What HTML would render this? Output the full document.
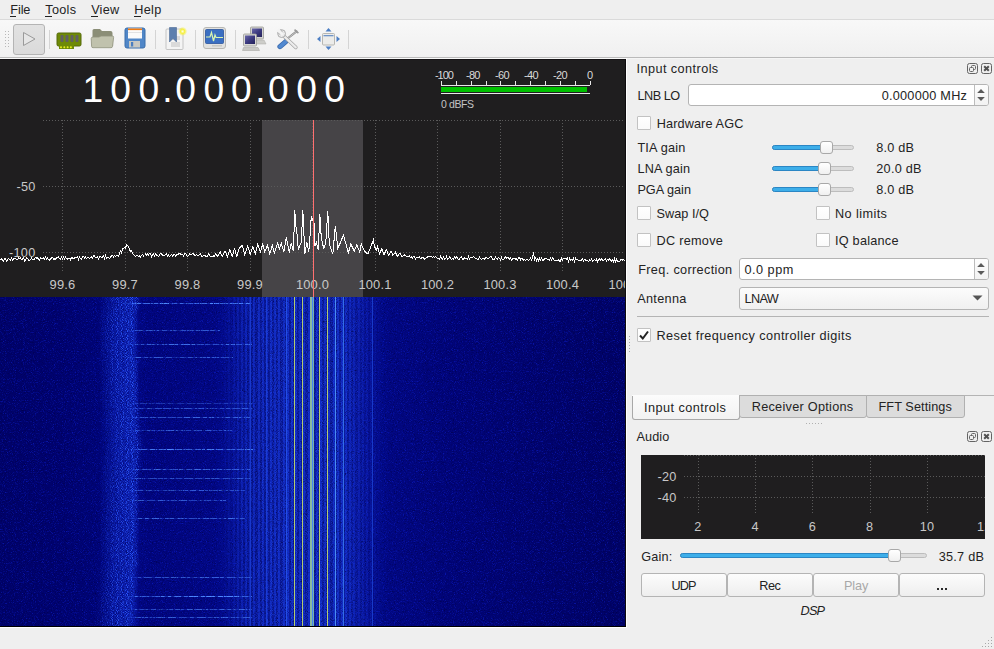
<!DOCTYPE html><html><head><meta charset="utf-8"><style>
html,body{margin:0;padding:0;width:994px;height:649px;overflow:hidden;background:#efefef;}
body{position:relative;font-family:"Liberation Sans",sans-serif;}
.a{position:absolute;}
.t{position:absolute;white-space:nowrap;font-family:"Liberation Sans",sans-serif;}
</style></head><body>
<div class="a" style="left:0px;top:0px;width:994px;height:19px;background:#efefef"></div>
<div class="a" style="left:0px;top:19px;width:994px;height:1px;background:#dadada"></div>
<div class="a" style="left:0px;top:20px;width:994px;height:37px;background:linear-gradient(#f8f8f8,#f0f0f0)"></div>
<div class="a" style="left:0px;top:57px;width:994px;height:1px;background:#bababa"></div>
<div class="a" style="left:0px;top:58px;width:627px;height:1px;background:#f8f8f8"></div>
<div class="a" style="left:627px;top:58px;width:367px;height:1px;background:#f5f5f5"></div>
<div class="t" style="left:10.30px;top:3.95px;font-size:12.7px;line-height:12.7px;color:#232323;letter-spacing:-0.117px;">File</div>
<div class="t" style="left:45.30px;top:3.95px;font-size:12.7px;line-height:12.7px;color:#232323;letter-spacing:0.287px;">Tools</div>
<div class="t" style="left:91.20px;top:3.95px;font-size:12.7px;line-height:12.7px;color:#232323;letter-spacing:0.200px;">View</div>
<div class="t" style="left:134.30px;top:3.95px;font-size:12.7px;line-height:12.7px;color:#232323;letter-spacing:0.300px;">Help</div>
<div class="a" style="left:10px;top:16px;width:6px;height:1px;background:#232323"></div>
<div class="a" style="left:45px;top:16px;width:7px;height:1px;background:#232323"></div>
<div class="a" style="left:91px;top:16px;width:7px;height:1px;background:#232323"></div>
<div class="a" style="left:134px;top:16px;width:7px;height:1px;background:#232323"></div>
<div class="a" style="left:5px;top:31px;width:1px;height:1px;background:#b8b8b8"></div>
<div class="a" style="left:8px;top:31px;width:1px;height:1px;background:#b8b8b8"></div>
<div class="a" style="left:5px;top:34px;width:1px;height:1px;background:#b8b8b8"></div>
<div class="a" style="left:8px;top:34px;width:1px;height:1px;background:#b8b8b8"></div>
<div class="a" style="left:5px;top:37px;width:1px;height:1px;background:#b8b8b8"></div>
<div class="a" style="left:8px;top:37px;width:1px;height:1px;background:#b8b8b8"></div>
<div class="a" style="left:5px;top:40px;width:1px;height:1px;background:#b8b8b8"></div>
<div class="a" style="left:8px;top:40px;width:1px;height:1px;background:#b8b8b8"></div>
<div class="a" style="left:5px;top:43px;width:1px;height:1px;background:#b8b8b8"></div>
<div class="a" style="left:8px;top:43px;width:1px;height:1px;background:#b8b8b8"></div>
<div class="a" style="left:5px;top:46px;width:1px;height:1px;background:#b8b8b8"></div>
<div class="a" style="left:8px;top:46px;width:1px;height:1px;background:#b8b8b8"></div>
<div class="a" style="left:13px;top:24px;width:32px;height:31px;box-sizing:border-box;border:1px solid #b4b4b4;border-radius:3px;background:linear-gradient(#e2e2e2,#dadada)"></div>
<svg class="a" style="left:21px;top:31px" width="16" height="16"><path d="M2.5 1.5 L14 8 L2.5 14.5 Z" fill="#e6e6e6" stroke="#9a9a9a" stroke-width="1"/></svg>
<div class="a" style="left:49px;top:30px;width:1px;height:19px;background:#d4d4d4"></div>
<div class="a" style="left:155px;top:30px;width:1px;height:19px;background:#d4d4d4"></div>
<div class="a" style="left:195px;top:30px;width:1px;height:19px;background:#d4d4d4"></div>
<div class="a" style="left:235px;top:30px;width:1px;height:19px;background:#d4d4d4"></div>
<div class="a" style="left:308px;top:30px;width:1px;height:19px;background:#d4d4d4"></div>
<div class="a" style="left:348px;top:30px;width:1px;height:19px;background:#d4d4d4"></div>
<svg class="a" style="left:56px;top:31px" width="28" height="20">
<rect x="1" y="2" width="24" height="13" rx="1.5" fill="#6e8a06" stroke="#55690a" stroke-width="1"/>
<rect x="3" y="14" width="15" height="4" fill="#6e8a06"/>
<rect x="4.5" y="4" width="3" height="7" rx="1" fill="#606060"/><rect x="9.5" y="4" width="3" height="7" rx="1" fill="#606060"/>
<rect x="14.5" y="4" width="3" height="7" rx="1" fill="#606060"/><rect x="19.5" y="4" width="3" height="7" rx="1" fill="#606060"/>
<circle cx="5" cy="16.3" r="1" fill="#e8f020"/><circle cx="8.3" cy="16.3" r="1" fill="#e8f020"/><circle cx="11.6" cy="16.3" r="1" fill="#e8f020"/><circle cx="14.9" cy="16.3" r="1" fill="#e8f020"/>
</svg>
<svg class="a" style="left:90px;top:28px" width="26" height="22">
<path d="M2.5 2.5 Q2.5 1 4 1 L10 1 L12 3 L20.5 3 Q22.5 3 22.5 5 L22.5 18 L2.5 18 Z" fill="#8b8e77"/>
<path d="M1.2 10.5 Q1.2 9 3 9 L9 9 L11 8 L22.5 8 Q23.8 8 23.6 9.5 L22.6 18.3 Q22.4 19.7 21 19.7 L3 19.7 Q1.6 19.7 1.6 18.3 Z" fill="#c0c2ad" stroke="#8f927c" stroke-width="0.8"/>
</svg>
<svg class="a" style="left:124px;top:27px" width="23" height="22">
<rect x="1" y="1" width="20" height="20" rx="2" fill="#5087c8" stroke="#3b6eab" stroke-width="1"/>
<rect x="4" y="1.5" width="14" height="10" fill="#fafafa"/>
<rect x="4" y="1.5" width="14" height="1.6" fill="#f07a10"/>
<rect x="4" y="5" width="14" height="0.8" fill="#dcdcdc"/>
<rect x="5" y="14" width="11" height="6.5" fill="#c8c8c2"/>
<rect x="7" y="15" width="2.2" height="4.5" fill="#4a7ec0"/>
</svg>
<svg class="a" style="left:164px;top:26px" width="24" height="25">
<rect x="2" y="3" width="17" height="20.5" rx="1" fill="#f4f4f4" stroke="#c4c4c4" stroke-width="1"/>
<rect x="7" y="10" width="9" height="4" fill="#dadada"/><rect x="7" y="16" width="9" height="5" fill="#dadada"/>
<path d="M5.5 1.5 L12.5 1.5 L12.5 16 L9 12.5 L5.5 16 Z" fill="#5d7fae" stroke="#4b6a96" stroke-width="0.6"/>
<defs><radialGradient id="stg1"><stop offset="0" stop-color="#ffffe8"/><stop offset="0.45" stop-color="#f6f040"/><stop offset="1" stop-color="#f6f040" stop-opacity="0"/></radialGradient></defs><circle cx="18.6" cy="5.4" r="4.6" fill="url(#stg1)"/>
</svg>
<svg class="a" style="left:202px;top:26px" width="26" height="24">
<rect x="1.5" y="1.5" width="22" height="21" rx="2.5" fill="#e2e2e0" stroke="#b8b8b4" stroke-width="1"/>
<rect x="3.5" y="3.5" width="18" height="14" rx="1" fill="#3a6fc2" stroke="#2b549a" stroke-width="0.8"/>
<path d="M4 11 L8 11 L9.5 6.5 L11.5 15 L13 9 L14 11.5 L21 11.5" fill="none" stroke="#d8f5b0" stroke-width="1.2"/>
<rect x="10" y="19" width="10" height="1.5" fill="#c8c8c4"/>
</svg>
<svg class="a" style="left:242px;top:26px" width="26" height="26">
<defs><linearGradient id="scr" x1="0" y1="0" x2="1" y2="1"><stop offset="0" stop-color="#6a68a8"/><stop offset="0.5" stop-color="#3c3a80"/><stop offset="1" stop-color="#25235a"/></linearGradient></defs>
<rect x="8.5" y="1" width="13" height="12" rx="1" fill="#d4d4d0" stroke="#9a9a96" stroke-width="0.8"/>
<rect x="10" y="2.5" width="10" height="8.5" fill="url(#scr)"/>
<path d="M12 14 L22 14 L24 18 L13 18 Z" fill="#cdcdc9" stroke="#a8a8a4" stroke-width="0.5"/>
<rect x="1.5" y="8" width="13" height="12" rx="1" fill="#dadad6" stroke="#9a9a96" stroke-width="0.8"/>
<rect x="3" y="9.5" width="10" height="8.5" fill="url(#scr)"/>
<path d="M1.5 21.5 L16 21.5 L17.5 24.5 L0.5 24.5 Z" fill="#c8c8c4" stroke="#a0a09c" stroke-width="0.5"/>
</svg>
<svg class="a" style="left:274px;top:26px" width="28" height="26">
<path d="M22.6 5.4 L13.5 12.5" stroke="#8a8a8a" stroke-width="2" stroke-linecap="round"/>
<path d="M22.6 5.4 L13.5 12.5" stroke="#e0e0e0" stroke-width="0.7"/>
<path d="M20.5 3.6 L24.4 7.2" stroke="#9a9a9a" stroke-width="1.6"/>
<path d="M11.8 15.6 L6 20.6" stroke="#3a6aae" stroke-width="5.2" stroke-linecap="round"/>
<path d="M11.8 15.6 L6 20.6" stroke="#5189d0" stroke-width="3.6" stroke-linecap="round"/>
<path d="M9.5 9.8 L21.8 21.4" stroke="#a4a4a4" stroke-width="3.6" stroke-linecap="round"/>
<path d="M9.5 9.8 L21.8 21.4" stroke="#ececec" stroke-width="2.2" stroke-linecap="round"/>
<circle cx="7.6" cy="7.6" r="3.9" fill="#ececec" stroke="#a4a4a4" stroke-width="0.9"/>
<path d="M2.2 5.2 L5.2 2.2 L8.8 6.4 L6.4 8.8 Z" fill="#f3f3f3"/><path d="M3.4 6.4 L6.4 8.8" stroke="#a4a4a4" stroke-width="0.8"/><path d="M6.4 3.4 L8.8 6.4" stroke="#a4a4a4" stroke-width="0.8"/>
<circle cx="7.9" cy="7.9" r="1.3" fill="#f4f4f4"/>
</svg>
<svg class="a" style="left:316px;top:27px" width="25" height="24">
<path d="M12.5 1 L15.5 4.5 L9.5 4.5 Z" fill="#4d7fc4"/>
<path d="M12.5 23 L15.5 19.5 L9.5 19.5 Z" fill="#4d7fc4"/>
<path d="M1 12 L4.5 9 L4.5 15 Z" fill="#4d7fc4"/>
<path d="M24 12 L20.5 9 L20.5 15 Z" fill="#4d7fc4"/>
<rect x="6.5" y="6.5" width="12" height="11.5" rx="1" fill="#ececea" stroke="#b0b0ac" stroke-width="0.9"/>
<rect x="7.5" y="8" width="10" height="1.3" fill="#6f94c8"/>
</svg>
<div class="a" style="left:0px;top:59px;width:626px;height:568px;background:#1f1e1f"></div>
<div class="a" style="left:0px;top:59px;width:626px;height:1px;background:#141214"></div>
<div class="a" style="left:625px;top:59px;width:1px;height:568px;background:#0e0c0e"></div>
<div class="a" style="left:626px;top:58px;width:1px;height:570px;background:#ffffff"></div>
<div class="a" style="left:0;top:0;width:625px;height:297px;overflow:hidden">
<div class="t" style="left:72.75px;top:70.61px;width:40px;text-align:center;font-size:37.2px;line-height:37.2px;color:#ffffff">1</div>
<div class="t" style="left:100.50px;top:70.61px;width:40px;text-align:center;font-size:37.2px;line-height:37.2px;color:#ffffff">0</div>
<div class="t" style="left:128.75px;top:70.61px;width:40px;text-align:center;font-size:37.2px;line-height:37.2px;color:#ffffff">0</div>
<div class="t" style="left:147.50px;top:70.61px;width:40px;text-align:center;font-size:37.2px;line-height:37.2px;color:#ffffff">.</div>
<div class="t" style="left:165.50px;top:70.61px;width:40px;text-align:center;font-size:37.2px;line-height:37.2px;color:#ffffff">0</div>
<div class="t" style="left:193.75px;top:70.61px;width:40px;text-align:center;font-size:37.2px;line-height:37.2px;color:#ffffff">0</div>
<div class="t" style="left:221.30px;top:70.61px;width:40px;text-align:center;font-size:37.2px;line-height:37.2px;color:#ffffff">0</div>
<div class="t" style="left:240.50px;top:70.61px;width:40px;text-align:center;font-size:37.2px;line-height:37.2px;color:#ffffff">.</div>
<div class="t" style="left:258.30px;top:70.61px;width:40px;text-align:center;font-size:37.2px;line-height:37.2px;color:#ffffff">0</div>
<div class="t" style="left:286.50px;top:70.61px;width:40px;text-align:center;font-size:37.2px;line-height:37.2px;color:#ffffff">0</div>
<div class="t" style="left:314.70px;top:70.61px;width:40px;text-align:center;font-size:37.2px;line-height:37.2px;color:#ffffff">0</div>
<div class="a" style="left:441px;top:85px;width:149px;height:1px;background:#e8e8e8"></div>
<div class="a" style="left:441px;top:81px;width:1px;height:4px;background:#e8e8e8"></div>
<div class="a" style="left:456px;top:81px;width:1px;height:4px;background:#e8e8e8"></div>
<div class="a" style="left:471px;top:81px;width:1px;height:4px;background:#e8e8e8"></div>
<div class="a" style="left:486px;top:81px;width:1px;height:4px;background:#e8e8e8"></div>
<div class="a" style="left:500px;top:81px;width:1px;height:4px;background:#e8e8e8"></div>
<div class="a" style="left:515px;top:81px;width:1px;height:4px;background:#e8e8e8"></div>
<div class="a" style="left:530px;top:81px;width:1px;height:4px;background:#e8e8e8"></div>
<div class="a" style="left:545px;top:81px;width:1px;height:4px;background:#e8e8e8"></div>
<div class="a" style="left:560px;top:81px;width:1px;height:4px;background:#e8e8e8"></div>
<div class="a" style="left:575px;top:81px;width:1px;height:4px;background:#e8e8e8"></div>
<div class="a" style="left:590px;top:81px;width:1px;height:4px;background:#e8e8e8"></div>
<div class="a" style="left:441px;top:87px;width:146px;height:5px;background:#00c000"></div>
<div class="a" style="left:441px;top:93px;width:149px;height:1px;background:#e8e8e8"></div>
<div class="t" style="left:434.90px;top:69.99px;font-size:11px;line-height:11px;color:#dadada;letter-spacing:-1.000px;">-100</div>
<div class="t" style="left:465.95px;top:69.99px;font-size:11px;line-height:11px;color:#dadada;letter-spacing:-0.700px;">-80</div>
<div class="t" style="left:495.05px;top:69.99px;font-size:11px;line-height:11px;color:#dadada;letter-spacing:-0.700px;">-60</div>
<div class="t" style="left:524.05px;top:69.99px;font-size:11px;line-height:11px;color:#dadada;letter-spacing:-0.700px;">-40</div>
<div class="t" style="left:553.05px;top:69.99px;font-size:11px;line-height:11px;color:#dadada;letter-spacing:-0.700px;">-20</div>
<div class="t" style="left:586.90px;top:69.99px;font-size:11px;line-height:11px;color:#dadada;">0</div>
<div class="t" style="left:441.00px;top:99.01px;font-size:10.5px;line-height:10.5px;color:#c4c4c4;letter-spacing:-0.400px;">0 dBFS</div>
<div class="a" style="left:262px;top:120px;width:101px;height:177px;background:#464447"></div>
<div class="a" style="left:43px;top:120px;width:583px;height:1px;background-image:linear-gradient(to right,#5a5a5a 1px,transparent 1px);background-size:3px 1px;"></div>
<div class="a" style="left:43px;top:186px;width:583px;height:1px;background-image:linear-gradient(to right,#5a5a5a 1px,transparent 1px);background-size:3px 1px;"></div>
<div class="a" style="left:43px;top:252px;width:583px;height:1px;background-image:linear-gradient(to right,#5a5a5a 1px,transparent 1px);background-size:3px 1px;"></div>
<div class="a" style="left:62px;top:120px;width:1px;height:151px;background-image:linear-gradient(#5a5a5a 1px,transparent 1px);background-size:1px 3px;"></div>
<div class="a" style="left:125px;top:120px;width:1px;height:151px;background-image:linear-gradient(#5a5a5a 1px,transparent 1px);background-size:1px 3px;"></div>
<div class="a" style="left:187px;top:120px;width:1px;height:151px;background-image:linear-gradient(#5a5a5a 1px,transparent 1px);background-size:1px 3px;"></div>
<div class="a" style="left:250px;top:120px;width:1px;height:151px;background-image:linear-gradient(#5a5a5a 1px,transparent 1px);background-size:1px 3px;"></div>
<div class="a" style="left:312px;top:120px;width:1px;height:151px;background-image:linear-gradient(#5a5a5a 1px,transparent 1px);background-size:1px 3px;"></div>
<div class="a" style="left:375px;top:120px;width:1px;height:151px;background-image:linear-gradient(#5a5a5a 1px,transparent 1px);background-size:1px 3px;"></div>
<div class="a" style="left:437px;top:120px;width:1px;height:151px;background-image:linear-gradient(#5a5a5a 1px,transparent 1px);background-size:1px 3px;"></div>
<div class="a" style="left:500px;top:120px;width:1px;height:151px;background-image:linear-gradient(#5a5a5a 1px,transparent 1px);background-size:1px 3px;"></div>
<div class="a" style="left:562px;top:120px;width:1px;height:151px;background-image:linear-gradient(#5a5a5a 1px,transparent 1px);background-size:1px 3px;"></div>
<svg class="a" style="left:0;top:0" width="625" height="296"><path d="M0.5 259.5 L1.5 259.0 L2.5 259.9 L3.5 260.9 L4.5 258.4 L5.5 258.4 L6.5 261.3 L7.5 260.3 L8.5 258.3 L9.5 259.3 L10.5 260.2 L11.5 258.2 L12.5 260.2 L13.5 258.6 L14.5 258.1 L15.5 258.1 L16.5 259.6 L17.5 259.5 L18.5 258.0 L19.5 258.5 L20.5 258.0 L21.5 259.9 L22.5 259.4 L23.5 257.9 L24.5 260.8 L25.5 259.8 L26.5 257.8 L27.5 258.3 L28.5 260.2 L29.5 260.2 L30.5 259.7 L31.5 257.7 L32.5 259.6 L33.5 259.6 L34.5 259.1 L35.5 257.5 L36.5 258.0 L37.5 257.5 L38.5 259.5 L39.5 260.4 L40.5 257.9 L41.5 258.4 L42.5 258.9 L43.5 257.8 L44.5 259.3 L45.5 257.3 L46.5 259.2 L47.5 258.2 L48.5 259.2 L49.5 260.2 L50.5 259.6 L51.5 257.6 L52.5 257.1 L53.5 259.1 L54.5 259.0 L55.5 259.5 L56.5 257.5 L57.5 257.9 L58.5 256.9 L59.5 258.9 L60.5 259.4 L61.5 256.8 L62.5 258.8 L63.5 256.8 L64.5 258.8 L65.5 257.2 L66.5 258.2 L67.5 259.2 L68.5 258.6 L69.5 258.1 L70.5 259.6 L71.5 257.6 L72.5 258.0 L73.5 258.5 L74.5 258.0 L75.5 257.5 L76.5 257.4 L77.5 256.9 L78.5 259.4 L79.5 256.8 L80.5 258.8 L81.5 259.3 L82.5 256.8 L83.5 256.2 L84.5 258.2 L85.5 257.2 L86.5 258.2 L87.5 257.6 L88.5 257.1 L89.5 258.6 L90.5 257.5 L91.5 257.0 L92.5 258.0 L93.5 256.0 L94.5 255.9 L95.5 257.9 L96.5 257.4 L97.5 256.4 L98.5 258.8 L99.5 256.8 L100.5 256.3 L101.5 257.2 L102.5 257.2 L103.5 255.7 L104.5 258.2 L105.5 255.6 L106.5 258.6 L107.5 257.6 L108.5 257.6 L109.5 258.5 L110.5 257.5 L111.5 255.5 L112.5 255.5 L113.5 256.9 L114.5 255.3 L115.5 256.2 L116.5 255.4 L117.5 255.6 L118.5 256.0 L119.5 253.7 L120.5 251.2 L121.5 253.0 L122.5 248.7 L123.5 248.5 L124.5 247.9 L125.5 248.2 L126.5 245.0 L127.5 245.7 L128.5 246.4 L129.5 250.0 L130.5 251.2 L131.5 251.0 L132.5 253.7 L133.5 254.2 L134.5 255.5 L135.5 256.6 L136.5 255.4 L137.5 255.2 L138.5 256.8 L139.5 255.9 L140.5 257.0 L141.5 255.5 L142.5 254.5 L143.5 256.0 L144.5 255.5 L145.5 254.0 L146.5 255.5 L147.5 253.5 L148.5 255.0 L149.5 253.5 L150.5 254.0 L151.5 256.5 L152.5 254.5 L153.5 254.0 L154.5 256.0 L155.5 254.0 L156.5 255.0 L157.5 255.0 L158.5 256.5 L159.5 255.0 L160.5 253.5 L161.5 254.0 L162.5 255.0 L163.5 255.0 L164.5 255.5 L165.5 254.5 L166.5 254.0 L167.5 256.5 L168.5 255.0 L169.5 256.5 L170.5 255.5 L171.5 254.5 L172.5 256.0 L173.5 255.0 L174.5 254.5 L175.5 256.0 L176.5 255.0 L177.5 254.0 L178.5 254.0 L179.5 253.5 L180.5 254.0 L181.5 254.0 L182.5 254.0 L183.5 256.0 L184.5 254.0 L185.5 253.5 L186.5 255.0 L187.5 256.5 L188.5 255.5 L189.5 254.0 L190.5 254.5 L191.5 254.5 L192.5 253.5 L193.5 254.0 L194.5 255.0 L195.5 255.5 L196.5 254.5 L197.5 255.5 L198.5 255.5 L199.5 254.5 L200.5 254.0 L201.5 256.0 L202.5 256.5 L203.5 255.5 L204.5 255.5 L205.5 256.0 L206.5 256.0 L207.5 256.0 L208.5 253.5 L209.5 255.0 L210.5 256.5 L211.5 256.5 L212.5 256.5 L213.5 256.0 L214.5 256.5 L215.5 253.6 L216.5 254.7 L217.5 256.4 L218.5 255.6 L219.5 252.9 L220.5 252.0 L221.5 255.6 L222.5 256.6 L223.5 254.2 L224.5 251.6 L225.5 251.1 L226.5 255.3 L227.5 256.8 L228.5 254.1 L229.5 250.0 L230.5 250.7 L231.5 255.4 L232.5 256.3 L233.5 251.9 L234.5 249.0 L235.5 251.6 L236.5 256.5 L237.5 255.2 L238.5 249.7 L239.5 247.9 L240.3 247.0 L242.3 245.5 L244.8 255.0 L247.8 246.0 L250.3 254.5 L252.8 247.0 L255.3 253.5 L257.8 244.0 L260.3 252.0 L262.8 244.0 L264.8 252.0 L267.3 245.0 L269.8 254.0 L272.3 245.5 L274.3 253.5 L277.8 243.0 L279.3 249.0 L281.3 243.0 L283.8 252.0 L286.3 237.0 L289.3 252.5 L291.3 243.0 L293.3 251.0 L294.8 210.5 L295.8 226.0 L296.8 231.0 L298.3 249.5 L301.3 242.0 L302.8 210.0 L303.8 231.0 L304.8 254.0 L306.8 242.0 L308.8 252.0 L310.3 232.0 L311.3 216.0 L312.8 220.0 L313.8 217.0 L314.8 246.0 L316.3 242.0 L318.3 250.0 L319.8 214.0 L321.3 238.0 L323.8 249.0 L325.8 242.0 L327.8 211.0 L329.3 244.0 L332.8 254.0 L335.3 226.0 L337.8 248.0 L340.3 243.0 L343.3 235.0 L346.3 245.0 L348.3 253.0 L350.8 244.0 L354.3 251.0 L356.8 245.0 L359.8 252.0 L361.3 244.0 L364.3 251.0 L367.8 254.0 L370.3 248.0 L373.3 240.0 L374.3 246.0 L376.3 250.0 L377.5 246.5 L378.5 250.3 L379.5 253.9 L380.5 252.6 L381.5 248.5 L382.5 249.2 L383.5 254.0 L384.5 254.6 L385.5 250.5 L386.5 249.9 L387.5 252.2 L388.5 255.6 L389.5 254.3 L390.5 251.1 L391.5 251.3 L392.5 255.1 L393.5 255.0 L394.5 253.5 L395.5 252.0 L396.5 254.8 L397.5 256.1 L398.5 254.8 L399.5 253.4 L400.5 254.0 L401.5 256.4 L402.5 256.8 L403.5 255.6 L404.5 255.0 L405.5 255.6 L406.5 256.8 L407.5 256.6 L408.5 256.3 L409.5 255.9 L410.5 257.5 L411.5 257.0 L412.5 258.5 L413.5 256.0 L414.5 256.0 L415.5 259.1 L416.5 257.1 L417.5 257.6 L418.5 257.1 L419.5 256.6 L420.5 258.6 L421.5 258.1 L422.5 257.1 L423.5 257.6 L424.5 259.1 L425.5 258.6 L426.5 257.2 L427.5 257.2 L428.5 256.2 L429.5 256.7 L430.5 256.2 L431.5 256.7 L432.5 257.7 L433.5 256.7 L434.5 257.2 L435.5 256.8 L436.5 257.8 L437.5 258.3 L438.5 258.3 L439.5 259.3 L440.5 256.3 L441.5 257.8 L442.5 258.8 L443.5 257.3 L444.5 259.3 L445.5 258.9 L446.5 256.4 L447.5 259.4 L448.5 258.9 L449.5 256.4 L450.5 257.9 L451.5 259.4 L452.5 258.9 L453.5 259.4 L454.5 256.9 L455.5 257.9 L456.5 257.0 L457.5 258.0 L458.5 259.5 L459.5 259.0 L460.5 257.5 L461.5 256.5 L462.5 259.5 L463.5 259.0 L464.5 258.0 L465.5 258.1 L466.5 258.1 L467.5 259.1 L468.5 256.6 L469.5 259.1 L470.5 257.1 L471.5 257.1 L472.5 257.1 L473.5 256.6 L474.5 257.1 L475.5 258.6 L476.5 258.2 L477.5 259.7 L478.5 259.2 L479.5 257.2 L480.5 258.7 L481.5 259.7 L482.5 258.7 L483.5 258.2 L484.5 259.2 L485.5 257.8 L486.5 257.3 L487.5 258.8 L488.5 258.8 L489.5 257.3 L490.5 256.8 L491.5 256.8 L492.5 259.8 L493.5 259.3 L494.5 259.3 L495.5 256.9 L496.5 258.9 L497.5 259.4 L498.5 257.4 L499.5 258.4 L500.5 259.9 L501.5 257.4 L502.5 259.9 L503.5 259.9 L504.5 257.4 L505.5 256.9 L506.5 258.0 L507.5 257.5 L508.5 258.0 L509.5 259.0 L510.5 257.5 L511.5 260.0 L512.5 259.0 L513.5 258.0 L514.5 258.0 L515.5 259.1 L516.5 258.6 L517.5 260.1 L518.5 257.6 L519.5 257.1 L520.5 260.0 L521.5 258.5 L522.5 259.0 L523.5 260.0 L524.5 259.6 L525.5 260.6 L526.5 259.6 L527.5 259.1 L528.5 260.6 L529.5 259.6 L530.5 258.1 L531.5 259.7 L532.5 258.2 L533.5 252.5 L534.5 259.7 L535.5 257.7 L536.5 260.7 L537.5 259.3 L538.5 260.8 L539.5 258.3 L540.5 259.8 L541.5 257.8 L542.5 260.8 L543.5 260.8 L544.5 258.4 L545.5 258.4 L546.5 258.4 L547.5 259.4 L548.5 259.9 L549.5 260.4 L550.5 257.9 L551.5 260.0 L552.5 258.0 L553.5 259.0 L554.5 260.5 L555.5 260.0 L556.5 260.0 L557.5 260.1 L558.5 259.6 L559.5 261.1 L560.5 261.1 L561.5 258.1 L562.5 260.1 L563.5 258.1 L564.5 258.7 L565.5 258.7 L566.5 259.2 L567.5 258.2 L568.5 261.2 L569.5 258.2 L570.5 260.2 L571.5 259.8 L572.5 260.3 L573.5 258.3 L574.5 261.3 L575.5 258.3 L576.5 259.8 L577.5 259.4 L578.5 260.4 L579.5 260.4 L580.5 260.4 L581.5 260.4 L582.5 258.9 L583.5 260.9 L584.5 259.5 L585.5 260.0 L586.5 260.5 L587.5 260.5 L588.5 261.5 L589.5 260.0 L590.5 260.6 L591.5 259.1 L592.5 261.1 L593.5 260.6 L594.5 259.6 L595.5 260.6 L596.5 259.1 L597.5 261.7 L598.5 260.2 L599.5 259.2 L600.5 260.2 L601.5 258.7 L602.5 260.2 L603.5 260.2 L604.5 259.8 L605.5 258.8 L606.5 261.3 L607.5 259.3 L608.5 260.3 L609.5 258.8 L610.5 259.4 L611.5 261.4 L612.5 259.9 L613.5 261.9 L614.5 258.9 L615.5 261.9 L616.5 259.4 L617.5 261.5 L618.5 261.5 L619.5 261.5 L620.5 260.0 L621.5 259.5 L622.5 260.0 L623.5 259.5 L624.5 260.6 L625.5 259.6" fill="none" stroke="#ffffff" stroke-width="1" stroke-linejoin="miter" shape-rendering="crispEdges"/></svg>
<div class="t" style="left:16.50px;top:181.25px;font-size:12.7px;line-height:12.7px;color:#c8c8c8;letter-spacing:0.175px;">-50</div>
<div class="t" style="left:8.90px;top:247.25px;font-size:12.7px;line-height:12.7px;color:#c8c8c8;letter-spacing:0.300px;">-100</div>
<div class="t" style="left:49.60px;top:279.18px;font-size:12.9px;line-height:12.9px;color:#c8c8c8;letter-spacing:0.167px;">99.6</div>
<div class="t" style="left:112.10px;top:279.18px;font-size:12.9px;line-height:12.9px;color:#c8c8c8;letter-spacing:0.167px;">99.7</div>
<div class="t" style="left:174.60px;top:279.18px;font-size:12.9px;line-height:12.9px;color:#c8c8c8;letter-spacing:0.167px;">99.8</div>
<div class="t" style="left:237.10px;top:279.18px;font-size:12.9px;line-height:12.9px;color:#c8c8c8;letter-spacing:0.167px;">99.9</div>
<div class="t" style="left:295.90px;top:279.18px;font-size:12.9px;line-height:12.9px;color:#c8c8c8;letter-spacing:0.175px;">100.0</div>
<div class="t" style="left:358.40px;top:279.18px;font-size:12.9px;line-height:12.9px;color:#c8c8c8;letter-spacing:0.175px;">100.1</div>
<div class="t" style="left:420.90px;top:279.18px;font-size:12.9px;line-height:12.9px;color:#c8c8c8;letter-spacing:0.175px;">100.2</div>
<div class="t" style="left:483.40px;top:279.18px;font-size:12.9px;line-height:12.9px;color:#c8c8c8;letter-spacing:0.175px;">100.3</div>
<div class="t" style="left:545.90px;top:279.18px;font-size:12.9px;line-height:12.9px;color:#c8c8c8;letter-spacing:0.175px;">100.4</div>
<div class="t" style="left:608.40px;top:279.18px;font-size:12.9px;line-height:12.9px;color:#c8c8c8;letter-spacing:0.175px;">100.5</div>
<div class="a" style="left:313px;top:120px;width:1px;height:177px;background:#ff7070"></div>
</div>
<div class="a" id="wf" style="left:0;top:297px;width:625px;height:329px;overflow:hidden;background:linear-gradient(to right,rgb(0, 2, 104) 0.00%,rgb(0, 2, 110) 9.60%,rgb(0, 4, 118) 16.00%,rgb(0, 5, 120) 15.68%,rgb(5, 16, 146) 18.56%,rgb(8, 22, 158) 21.44%,rgb(2, 7, 130) 22.24%,rgb(1, 5, 124) 24.00%,rgb(2, 7, 130) 34.40%,rgb(5, 14, 146) 37.12%,rgb(9, 24, 164) 40.00%,rgb(12, 30, 176) 45.60%,rgb(12, 30, 176) 55.20%,rgb(5, 13, 144) 59.52%,rgb(2, 7, 128) 62.40%,rgb(1, 4, 118) 72.00%,rgb(0, 2, 100) 100.00%)">
<div class="a" style="left:220px;top:0;width:165px;height:330px;background:repeating-linear-gradient(to right,rgba(40,90,255,0.2) 0px,rgba(40,90,255,0.2) 2px,rgba(0,0,50,0.25) 2px,rgba(0,0,50,0.25) 4.17px);-webkit-mask-image:linear-gradient(to right,transparent,#000 20%,#000 72%,transparent);mask-image:linear-gradient(to right,transparent,#000 20%,#000 72%,transparent)"></div>
<svg class="a" style="left:0;top:0" width="625" height="330"><line x1="124" y1="6.5" x2="252" y2="6.5" stroke="rgb(50,100,240)" stroke-opacity="0.36" stroke-width="1"/><line x1="132" y1="6.5" x2="141" y2="6.5" stroke="rgb(80,140,255)" stroke-opacity="0.85" stroke-width="1"/><line x1="143" y1="6.5" x2="150" y2="6.5" stroke="rgb(80,140,255)" stroke-opacity="0.71" stroke-width="1"/><line x1="151" y1="6.5" x2="158" y2="6.5" stroke="rgb(80,140,255)" stroke-opacity="0.66" stroke-width="1"/><line x1="160" y1="6.5" x2="169" y2="6.5" stroke="rgb(80,140,255)" stroke-opacity="0.95" stroke-width="1"/><line x1="172" y1="6.5" x2="177" y2="6.5" stroke="rgb(80,140,255)" stroke-opacity="0.53" stroke-width="1"/><line x1="180" y1="6.5" x2="184" y2="6.5" stroke="rgb(80,140,255)" stroke-opacity="0.71" stroke-width="1"/><line x1="186" y1="6.5" x2="193" y2="6.5" stroke="rgb(80,140,255)" stroke-opacity="0.56" stroke-width="1"/><line x1="194" y1="6.5" x2="199" y2="6.5" stroke="rgb(80,140,255)" stroke-opacity="0.78" stroke-width="1"/><line x1="200" y1="6.5" x2="207" y2="6.5" stroke="rgb(80,140,255)" stroke-opacity="0.72" stroke-width="1"/><line x1="210" y1="6.5" x2="213" y2="6.5" stroke="rgb(80,140,255)" stroke-opacity="0.97" stroke-width="1"/><line x1="214" y1="6.5" x2="219" y2="6.5" stroke="rgb(80,140,255)" stroke-opacity="1.00" stroke-width="1"/><line x1="220" y1="6.5" x2="228" y2="6.5" stroke="rgb(80,140,255)" stroke-opacity="0.58" stroke-width="1"/><line x1="230" y1="6.5" x2="238" y2="6.5" stroke="rgb(80,140,255)" stroke-opacity="0.79" stroke-width="1"/><line x1="239" y1="6.5" x2="243" y2="6.5" stroke="rgb(80,140,255)" stroke-opacity="0.96" stroke-width="1"/><line x1="246" y1="6.5" x2="250" y2="6.5" stroke="rgb(80,140,255)" stroke-opacity="0.92" stroke-width="1"/><line x1="127" y1="33.5" x2="220" y2="33.5" stroke="rgb(50,100,240)" stroke-opacity="0.25" stroke-width="1"/><line x1="135" y1="33.5" x2="143" y2="33.5" stroke="rgb(80,140,255)" stroke-opacity="0.50" stroke-width="1"/><line x1="146" y1="33.5" x2="155" y2="33.5" stroke="rgb(80,140,255)" stroke-opacity="0.57" stroke-width="1"/><line x1="157" y1="33.5" x2="159" y2="33.5" stroke="rgb(80,140,255)" stroke-opacity="0.60" stroke-width="1"/><line x1="162" y1="33.5" x2="167" y2="33.5" stroke="rgb(80,140,255)" stroke-opacity="0.45" stroke-width="1"/><line x1="170" y1="33.5" x2="177" y2="33.5" stroke="rgb(80,140,255)" stroke-opacity="0.49" stroke-width="1"/><line x1="180" y1="33.5" x2="186" y2="33.5" stroke="rgb(80,140,255)" stroke-opacity="0.45" stroke-width="1"/><line x1="187" y1="33.5" x2="194" y2="33.5" stroke="rgb(80,140,255)" stroke-opacity="0.49" stroke-width="1"/><line x1="196" y1="33.5" x2="200" y2="33.5" stroke="rgb(80,140,255)" stroke-opacity="0.49" stroke-width="1"/><line x1="201" y1="33.5" x2="209" y2="33.5" stroke="rgb(80,140,255)" stroke-opacity="0.54" stroke-width="1"/><line x1="210" y1="33.5" x2="215" y2="33.5" stroke="rgb(80,140,255)" stroke-opacity="0.51" stroke-width="1"/><line x1="218" y1="33.5" x2="220" y2="33.5" stroke="rgb(80,140,255)" stroke-opacity="0.62" stroke-width="1"/><line x1="127" y1="47.5" x2="252" y2="47.5" stroke="rgb(50,100,240)" stroke-opacity="0.27" stroke-width="1"/><line x1="135" y1="47.5" x2="138" y2="47.5" stroke="rgb(80,140,255)" stroke-opacity="0.48" stroke-width="1"/><line x1="141" y1="47.5" x2="144" y2="47.5" stroke="rgb(80,140,255)" stroke-opacity="0.50" stroke-width="1"/><line x1="147" y1="47.5" x2="155" y2="47.5" stroke="rgb(80,140,255)" stroke-opacity="0.58" stroke-width="1"/><line x1="157" y1="47.5" x2="159" y2="47.5" stroke="rgb(80,140,255)" stroke-opacity="0.56" stroke-width="1"/><line x1="162" y1="47.5" x2="167" y2="47.5" stroke="rgb(80,140,255)" stroke-opacity="0.50" stroke-width="1"/><line x1="169" y1="47.5" x2="178" y2="47.5" stroke="rgb(80,140,255)" stroke-opacity="0.74" stroke-width="1"/><line x1="181" y1="47.5" x2="190" y2="47.5" stroke="rgb(80,140,255)" stroke-opacity="0.74" stroke-width="1"/><line x1="191" y1="47.5" x2="195" y2="47.5" stroke="rgb(80,140,255)" stroke-opacity="0.73" stroke-width="1"/><line x1="197" y1="47.5" x2="204" y2="47.5" stroke="rgb(80,140,255)" stroke-opacity="0.46" stroke-width="1"/><line x1="205" y1="47.5" x2="210" y2="47.5" stroke="rgb(80,140,255)" stroke-opacity="0.40" stroke-width="1"/><line x1="213" y1="47.5" x2="219" y2="47.5" stroke="rgb(80,140,255)" stroke-opacity="0.46" stroke-width="1"/><line x1="221" y1="47.5" x2="223" y2="47.5" stroke="rgb(80,140,255)" stroke-opacity="0.41" stroke-width="1"/><line x1="226" y1="47.5" x2="229" y2="47.5" stroke="rgb(80,140,255)" stroke-opacity="0.76" stroke-width="1"/><line x1="231" y1="47.5" x2="235" y2="47.5" stroke="rgb(80,140,255)" stroke-opacity="0.73" stroke-width="1"/><line x1="236" y1="47.5" x2="242" y2="47.5" stroke="rgb(80,140,255)" stroke-opacity="0.44" stroke-width="1"/><line x1="245" y1="47.5" x2="252" y2="47.5" stroke="rgb(80,140,255)" stroke-opacity="0.62" stroke-width="1"/><line x1="127" y1="60.5" x2="233" y2="60.5" stroke="rgb(50,100,240)" stroke-opacity="0.25" stroke-width="1"/><line x1="135" y1="60.5" x2="141" y2="60.5" stroke="rgb(80,140,255)" stroke-opacity="0.68" stroke-width="1"/><line x1="144" y1="60.5" x2="148" y2="60.5" stroke="rgb(80,140,255)" stroke-opacity="0.46" stroke-width="1"/><line x1="150" y1="60.5" x2="152" y2="60.5" stroke="rgb(80,140,255)" stroke-opacity="0.47" stroke-width="1"/><line x1="154" y1="60.5" x2="163" y2="60.5" stroke="rgb(80,140,255)" stroke-opacity="0.63" stroke-width="1"/><line x1="166" y1="60.5" x2="172" y2="60.5" stroke="rgb(80,140,255)" stroke-opacity="0.45" stroke-width="1"/><line x1="175" y1="60.5" x2="177" y2="60.5" stroke="rgb(80,140,255)" stroke-opacity="0.37" stroke-width="1"/><line x1="180" y1="60.5" x2="186" y2="60.5" stroke="rgb(80,140,255)" stroke-opacity="0.41" stroke-width="1"/><line x1="188" y1="60.5" x2="193" y2="60.5" stroke="rgb(80,140,255)" stroke-opacity="0.52" stroke-width="1"/><line x1="195" y1="60.5" x2="197" y2="60.5" stroke="rgb(80,140,255)" stroke-opacity="0.55" stroke-width="1"/><line x1="200" y1="60.5" x2="206" y2="60.5" stroke="rgb(80,140,255)" stroke-opacity="0.50" stroke-width="1"/><line x1="207" y1="60.5" x2="210" y2="60.5" stroke="rgb(80,140,255)" stroke-opacity="0.63" stroke-width="1"/><line x1="212" y1="60.5" x2="219" y2="60.5" stroke="rgb(80,140,255)" stroke-opacity="0.58" stroke-width="1"/><line x1="221" y1="60.5" x2="229" y2="60.5" stroke="rgb(80,140,255)" stroke-opacity="0.42" stroke-width="1"/><line x1="232" y1="60.5" x2="233" y2="60.5" stroke="rgb(80,140,255)" stroke-opacity="0.63" stroke-width="1"/><line x1="127" y1="106.5" x2="252" y2="106.5" stroke="rgb(50,100,240)" stroke-opacity="0.14" stroke-width="1"/><line x1="135" y1="106.5" x2="138" y2="106.5" stroke="rgb(80,140,255)" stroke-opacity="0.30" stroke-width="1"/><line x1="140" y1="106.5" x2="148" y2="106.5" stroke="rgb(80,140,255)" stroke-opacity="0.33" stroke-width="1"/><line x1="149" y1="106.5" x2="154" y2="106.5" stroke="rgb(80,140,255)" stroke-opacity="0.25" stroke-width="1"/><line x1="156" y1="106.5" x2="165" y2="106.5" stroke="rgb(80,140,255)" stroke-opacity="0.31" stroke-width="1"/><line x1="168" y1="106.5" x2="173" y2="106.5" stroke="rgb(80,140,255)" stroke-opacity="0.31" stroke-width="1"/><line x1="176" y1="106.5" x2="184" y2="106.5" stroke="rgb(80,140,255)" stroke-opacity="0.24" stroke-width="1"/><line x1="187" y1="106.5" x2="195" y2="106.5" stroke="rgb(80,140,255)" stroke-opacity="0.26" stroke-width="1"/><line x1="197" y1="106.5" x2="204" y2="106.5" stroke="rgb(80,140,255)" stroke-opacity="0.32" stroke-width="1"/><line x1="205" y1="106.5" x2="211" y2="106.5" stroke="rgb(80,140,255)" stroke-opacity="0.32" stroke-width="1"/><line x1="213" y1="106.5" x2="221" y2="106.5" stroke="rgb(80,140,255)" stroke-opacity="0.23" stroke-width="1"/><line x1="223" y1="106.5" x2="228" y2="106.5" stroke="rgb(80,140,255)" stroke-opacity="0.31" stroke-width="1"/><line x1="230" y1="106.5" x2="239" y2="106.5" stroke="rgb(80,140,255)" stroke-opacity="0.21" stroke-width="1"/><line x1="240" y1="106.5" x2="247" y2="106.5" stroke="rgb(80,140,255)" stroke-opacity="0.24" stroke-width="1"/><line x1="249" y1="106.5" x2="252" y2="106.5" stroke="rgb(80,140,255)" stroke-opacity="0.37" stroke-width="1"/><line x1="127" y1="111.5" x2="252" y2="111.5" stroke="rgb(50,100,240)" stroke-opacity="0.23" stroke-width="1"/><line x1="135" y1="111.5" x2="137" y2="111.5" stroke="rgb(80,140,255)" stroke-opacity="0.44" stroke-width="1"/><line x1="139" y1="111.5" x2="144" y2="111.5" stroke="rgb(80,140,255)" stroke-opacity="0.46" stroke-width="1"/><line x1="147" y1="111.5" x2="152" y2="111.5" stroke="rgb(80,140,255)" stroke-opacity="0.61" stroke-width="1"/><line x1="155" y1="111.5" x2="162" y2="111.5" stroke="rgb(80,140,255)" stroke-opacity="0.48" stroke-width="1"/><line x1="163" y1="111.5" x2="171" y2="111.5" stroke="rgb(80,140,255)" stroke-opacity="0.48" stroke-width="1"/><line x1="174" y1="111.5" x2="179" y2="111.5" stroke="rgb(80,140,255)" stroke-opacity="0.47" stroke-width="1"/><line x1="181" y1="111.5" x2="183" y2="111.5" stroke="rgb(80,140,255)" stroke-opacity="0.45" stroke-width="1"/><line x1="184" y1="111.5" x2="192" y2="111.5" stroke="rgb(80,140,255)" stroke-opacity="0.53" stroke-width="1"/><line x1="195" y1="111.5" x2="197" y2="111.5" stroke="rgb(80,140,255)" stroke-opacity="0.50" stroke-width="1"/><line x1="198" y1="111.5" x2="204" y2="111.5" stroke="rgb(80,140,255)" stroke-opacity="0.56" stroke-width="1"/><line x1="206" y1="111.5" x2="208" y2="111.5" stroke="rgb(80,140,255)" stroke-opacity="0.56" stroke-width="1"/><line x1="210" y1="111.5" x2="217" y2="111.5" stroke="rgb(80,140,255)" stroke-opacity="0.42" stroke-width="1"/><line x1="220" y1="111.5" x2="224" y2="111.5" stroke="rgb(80,140,255)" stroke-opacity="0.40" stroke-width="1"/><line x1="226" y1="111.5" x2="230" y2="111.5" stroke="rgb(80,140,255)" stroke-opacity="0.48" stroke-width="1"/><line x1="232" y1="111.5" x2="240" y2="111.5" stroke="rgb(80,140,255)" stroke-opacity="0.42" stroke-width="1"/><line x1="242" y1="111.5" x2="248" y2="111.5" stroke="rgb(80,140,255)" stroke-opacity="0.58" stroke-width="1"/><line x1="250" y1="111.5" x2="252" y2="111.5" stroke="rgb(80,140,255)" stroke-opacity="0.37" stroke-width="1"/><line x1="127" y1="120.5" x2="252" y2="120.5" stroke="rgb(50,100,240)" stroke-opacity="0.25" stroke-width="1"/><line x1="135" y1="120.5" x2="137" y2="120.5" stroke="rgb(80,140,255)" stroke-opacity="0.57" stroke-width="1"/><line x1="140" y1="120.5" x2="148" y2="120.5" stroke="rgb(80,140,255)" stroke-opacity="0.50" stroke-width="1"/><line x1="150" y1="120.5" x2="156" y2="120.5" stroke="rgb(80,140,255)" stroke-opacity="0.50" stroke-width="1"/><line x1="158" y1="120.5" x2="166" y2="120.5" stroke="rgb(80,140,255)" stroke-opacity="0.49" stroke-width="1"/><line x1="168" y1="120.5" x2="176" y2="120.5" stroke="rgb(80,140,255)" stroke-opacity="0.42" stroke-width="1"/><line x1="177" y1="120.5" x2="182" y2="120.5" stroke="rgb(80,140,255)" stroke-opacity="0.40" stroke-width="1"/><line x1="184" y1="120.5" x2="190" y2="120.5" stroke="rgb(80,140,255)" stroke-opacity="0.66" stroke-width="1"/><line x1="193" y1="120.5" x2="200" y2="120.5" stroke="rgb(80,140,255)" stroke-opacity="0.67" stroke-width="1"/><line x1="203" y1="120.5" x2="207" y2="120.5" stroke="rgb(80,140,255)" stroke-opacity="0.64" stroke-width="1"/><line x1="209" y1="120.5" x2="214" y2="120.5" stroke="rgb(80,140,255)" stroke-opacity="0.66" stroke-width="1"/><line x1="217" y1="120.5" x2="219" y2="120.5" stroke="rgb(80,140,255)" stroke-opacity="0.47" stroke-width="1"/><line x1="222" y1="120.5" x2="224" y2="120.5" stroke="rgb(80,140,255)" stroke-opacity="0.43" stroke-width="1"/><line x1="225" y1="120.5" x2="230" y2="120.5" stroke="rgb(80,140,255)" stroke-opacity="0.63" stroke-width="1"/><line x1="233" y1="120.5" x2="238" y2="120.5" stroke="rgb(80,140,255)" stroke-opacity="0.62" stroke-width="1"/><line x1="239" y1="120.5" x2="241" y2="120.5" stroke="rgb(80,140,255)" stroke-opacity="0.67" stroke-width="1"/><line x1="244" y1="120.5" x2="251" y2="120.5" stroke="rgb(80,140,255)" stroke-opacity="0.53" stroke-width="1"/><line x1="127" y1="133.5" x2="233" y2="133.5" stroke="rgb(50,100,240)" stroke-opacity="0.23" stroke-width="1"/><line x1="135" y1="133.5" x2="140" y2="133.5" stroke="rgb(80,140,255)" stroke-opacity="0.36" stroke-width="1"/><line x1="142" y1="133.5" x2="144" y2="133.5" stroke="rgb(80,140,255)" stroke-opacity="0.37" stroke-width="1"/><line x1="147" y1="133.5" x2="155" y2="133.5" stroke="rgb(80,140,255)" stroke-opacity="0.48" stroke-width="1"/><line x1="158" y1="133.5" x2="164" y2="133.5" stroke="rgb(80,140,255)" stroke-opacity="0.44" stroke-width="1"/><line x1="166" y1="133.5" x2="174" y2="133.5" stroke="rgb(80,140,255)" stroke-opacity="0.60" stroke-width="1"/><line x1="176" y1="133.5" x2="178" y2="133.5" stroke="rgb(80,140,255)" stroke-opacity="0.59" stroke-width="1"/><line x1="181" y1="133.5" x2="183" y2="133.5" stroke="rgb(80,140,255)" stroke-opacity="0.48" stroke-width="1"/><line x1="184" y1="133.5" x2="191" y2="133.5" stroke="rgb(80,140,255)" stroke-opacity="0.36" stroke-width="1"/><line x1="194" y1="133.5" x2="202" y2="133.5" stroke="rgb(80,140,255)" stroke-opacity="0.45" stroke-width="1"/><line x1="205" y1="133.5" x2="212" y2="133.5" stroke="rgb(80,140,255)" stroke-opacity="0.58" stroke-width="1"/><line x1="213" y1="133.5" x2="217" y2="133.5" stroke="rgb(80,140,255)" stroke-opacity="0.35" stroke-width="1"/><line x1="219" y1="133.5" x2="222" y2="133.5" stroke="rgb(80,140,255)" stroke-opacity="0.36" stroke-width="1"/><line x1="224" y1="133.5" x2="226" y2="133.5" stroke="rgb(80,140,255)" stroke-opacity="0.61" stroke-width="1"/><line x1="227" y1="133.5" x2="229" y2="133.5" stroke="rgb(80,140,255)" stroke-opacity="0.54" stroke-width="1"/><line x1="230" y1="133.5" x2="232" y2="133.5" stroke="rgb(80,140,255)" stroke-opacity="0.40" stroke-width="1"/><line x1="130" y1="152.5" x2="255" y2="152.5" stroke="rgb(50,100,240)" stroke-opacity="0.36" stroke-width="1"/><line x1="138" y1="152.5" x2="147" y2="152.5" stroke="rgb(80,140,255)" stroke-opacity="0.63" stroke-width="1"/><line x1="150" y1="152.5" x2="157" y2="152.5" stroke="rgb(80,140,255)" stroke-opacity="0.84" stroke-width="1"/><line x1="159" y1="152.5" x2="166" y2="152.5" stroke="rgb(80,140,255)" stroke-opacity="0.72" stroke-width="1"/><line x1="167" y1="152.5" x2="174" y2="152.5" stroke="rgb(80,140,255)" stroke-opacity="1.00" stroke-width="1"/><line x1="175" y1="152.5" x2="182" y2="152.5" stroke="rgb(80,140,255)" stroke-opacity="0.67" stroke-width="1"/><line x1="183" y1="152.5" x2="192" y2="152.5" stroke="rgb(80,140,255)" stroke-opacity="0.59" stroke-width="1"/><line x1="195" y1="152.5" x2="201" y2="152.5" stroke="rgb(80,140,255)" stroke-opacity="0.62" stroke-width="1"/><line x1="202" y1="152.5" x2="205" y2="152.5" stroke="rgb(80,140,255)" stroke-opacity="0.74" stroke-width="1"/><line x1="207" y1="152.5" x2="214" y2="152.5" stroke="rgb(80,140,255)" stroke-opacity="0.89" stroke-width="1"/><line x1="216" y1="152.5" x2="223" y2="152.5" stroke="rgb(80,140,255)" stroke-opacity="0.71" stroke-width="1"/><line x1="226" y1="152.5" x2="235" y2="152.5" stroke="rgb(80,140,255)" stroke-opacity="0.62" stroke-width="1"/><line x1="237" y1="152.5" x2="244" y2="152.5" stroke="rgb(80,140,255)" stroke-opacity="0.64" stroke-width="1"/><line x1="245" y1="152.5" x2="253" y2="152.5" stroke="rgb(80,140,255)" stroke-opacity="0.82" stroke-width="1"/><line x1="127" y1="172.5" x2="252" y2="172.5" stroke="rgb(50,100,240)" stroke-opacity="0.27" stroke-width="1"/><line x1="135" y1="172.5" x2="139" y2="172.5" stroke="rgb(80,140,255)" stroke-opacity="0.64" stroke-width="1"/><line x1="142" y1="172.5" x2="151" y2="172.5" stroke="rgb(80,140,255)" stroke-opacity="0.50" stroke-width="1"/><line x1="154" y1="172.5" x2="161" y2="172.5" stroke="rgb(80,140,255)" stroke-opacity="0.76" stroke-width="1"/><line x1="163" y1="172.5" x2="166" y2="172.5" stroke="rgb(80,140,255)" stroke-opacity="0.61" stroke-width="1"/><line x1="169" y1="172.5" x2="178" y2="172.5" stroke="rgb(80,140,255)" stroke-opacity="0.53" stroke-width="1"/><line x1="179" y1="172.5" x2="183" y2="172.5" stroke="rgb(80,140,255)" stroke-opacity="0.62" stroke-width="1"/><line x1="186" y1="172.5" x2="192" y2="172.5" stroke="rgb(80,140,255)" stroke-opacity="0.52" stroke-width="1"/><line x1="194" y1="172.5" x2="201" y2="172.5" stroke="rgb(80,140,255)" stroke-opacity="0.73" stroke-width="1"/><line x1="203" y1="172.5" x2="210" y2="172.5" stroke="rgb(80,140,255)" stroke-opacity="0.61" stroke-width="1"/><line x1="213" y1="172.5" x2="216" y2="172.5" stroke="rgb(80,140,255)" stroke-opacity="0.62" stroke-width="1"/><line x1="217" y1="172.5" x2="222" y2="172.5" stroke="rgb(80,140,255)" stroke-opacity="0.62" stroke-width="1"/><line x1="224" y1="172.5" x2="231" y2="172.5" stroke="rgb(80,140,255)" stroke-opacity="0.50" stroke-width="1"/><line x1="232" y1="172.5" x2="239" y2="172.5" stroke="rgb(80,140,255)" stroke-opacity="0.63" stroke-width="1"/><line x1="242" y1="172.5" x2="244" y2="172.5" stroke="rgb(80,140,255)" stroke-opacity="0.52" stroke-width="1"/><line x1="247" y1="172.5" x2="250" y2="172.5" stroke="rgb(80,140,255)" stroke-opacity="0.59" stroke-width="1"/><line x1="127" y1="181.5" x2="252" y2="181.5" stroke="rgb(50,100,240)" stroke-opacity="0.23" stroke-width="1"/><line x1="135" y1="181.5" x2="141" y2="181.5" stroke="rgb(80,140,255)" stroke-opacity="0.57" stroke-width="1"/><line x1="142" y1="181.5" x2="145" y2="181.5" stroke="rgb(80,140,255)" stroke-opacity="0.42" stroke-width="1"/><line x1="148" y1="181.5" x2="157" y2="181.5" stroke="rgb(80,140,255)" stroke-opacity="0.42" stroke-width="1"/><line x1="158" y1="181.5" x2="163" y2="181.5" stroke="rgb(80,140,255)" stroke-opacity="0.39" stroke-width="1"/><line x1="164" y1="181.5" x2="167" y2="181.5" stroke="rgb(80,140,255)" stroke-opacity="0.39" stroke-width="1"/><line x1="170" y1="181.5" x2="174" y2="181.5" stroke="rgb(80,140,255)" stroke-opacity="0.55" stroke-width="1"/><line x1="176" y1="181.5" x2="182" y2="181.5" stroke="rgb(80,140,255)" stroke-opacity="0.37" stroke-width="1"/><line x1="184" y1="181.5" x2="193" y2="181.5" stroke="rgb(80,140,255)" stroke-opacity="0.46" stroke-width="1"/><line x1="195" y1="181.5" x2="203" y2="181.5" stroke="rgb(80,140,255)" stroke-opacity="0.41" stroke-width="1"/><line x1="205" y1="181.5" x2="210" y2="181.5" stroke="rgb(80,140,255)" stroke-opacity="0.51" stroke-width="1"/><line x1="211" y1="181.5" x2="220" y2="181.5" stroke="rgb(80,140,255)" stroke-opacity="0.53" stroke-width="1"/><line x1="223" y1="181.5" x2="230" y2="181.5" stroke="rgb(80,140,255)" stroke-opacity="0.45" stroke-width="1"/><line x1="232" y1="181.5" x2="236" y2="181.5" stroke="rgb(80,140,255)" stroke-opacity="0.35" stroke-width="1"/><line x1="237" y1="181.5" x2="243" y2="181.5" stroke="rgb(80,140,255)" stroke-opacity="0.53" stroke-width="1"/><line x1="245" y1="181.5" x2="251" y2="181.5" stroke="rgb(80,140,255)" stroke-opacity="0.38" stroke-width="1"/><line x1="127" y1="193.5" x2="245" y2="193.5" stroke="rgb(50,100,240)" stroke-opacity="0.23" stroke-width="1"/><line x1="135" y1="193.5" x2="143" y2="193.5" stroke="rgb(80,140,255)" stroke-opacity="0.43" stroke-width="1"/><line x1="146" y1="193.5" x2="152" y2="193.5" stroke="rgb(80,140,255)" stroke-opacity="0.46" stroke-width="1"/><line x1="154" y1="193.5" x2="156" y2="193.5" stroke="rgb(80,140,255)" stroke-opacity="0.35" stroke-width="1"/><line x1="157" y1="193.5" x2="160" y2="193.5" stroke="rgb(80,140,255)" stroke-opacity="0.42" stroke-width="1"/><line x1="163" y1="193.5" x2="167" y2="193.5" stroke="rgb(80,140,255)" stroke-opacity="0.37" stroke-width="1"/><line x1="168" y1="193.5" x2="176" y2="193.5" stroke="rgb(80,140,255)" stroke-opacity="0.48" stroke-width="1"/><line x1="179" y1="193.5" x2="182" y2="193.5" stroke="rgb(80,140,255)" stroke-opacity="0.37" stroke-width="1"/><line x1="183" y1="193.5" x2="188" y2="193.5" stroke="rgb(80,140,255)" stroke-opacity="0.59" stroke-width="1"/><line x1="190" y1="193.5" x2="196" y2="193.5" stroke="rgb(80,140,255)" stroke-opacity="0.58" stroke-width="1"/><line x1="199" y1="193.5" x2="204" y2="193.5" stroke="rgb(80,140,255)" stroke-opacity="0.61" stroke-width="1"/><line x1="205" y1="193.5" x2="208" y2="193.5" stroke="rgb(80,140,255)" stroke-opacity="0.41" stroke-width="1"/><line x1="209" y1="193.5" x2="218" y2="193.5" stroke="rgb(80,140,255)" stroke-opacity="0.48" stroke-width="1"/><line x1="219" y1="193.5" x2="223" y2="193.5" stroke="rgb(80,140,255)" stroke-opacity="0.58" stroke-width="1"/><line x1="226" y1="193.5" x2="228" y2="193.5" stroke="rgb(80,140,255)" stroke-opacity="0.42" stroke-width="1"/><line x1="230" y1="193.5" x2="239" y2="193.5" stroke="rgb(80,140,255)" stroke-opacity="0.44" stroke-width="1"/><line x1="241" y1="193.5" x2="245" y2="193.5" stroke="rgb(80,140,255)" stroke-opacity="0.35" stroke-width="1"/><line x1="127" y1="203.5" x2="226" y2="203.5" stroke="rgb(50,100,240)" stroke-opacity="0.23" stroke-width="1"/><line x1="135" y1="203.5" x2="144" y2="203.5" stroke="rgb(80,140,255)" stroke-opacity="0.57" stroke-width="1"/><line x1="147" y1="203.5" x2="155" y2="203.5" stroke="rgb(80,140,255)" stroke-opacity="0.33" stroke-width="1"/><line x1="158" y1="203.5" x2="165" y2="203.5" stroke="rgb(80,140,255)" stroke-opacity="0.60" stroke-width="1"/><line x1="167" y1="203.5" x2="169" y2="203.5" stroke="rgb(80,140,255)" stroke-opacity="0.57" stroke-width="1"/><line x1="171" y1="203.5" x2="177" y2="203.5" stroke="rgb(80,140,255)" stroke-opacity="0.40" stroke-width="1"/><line x1="179" y1="203.5" x2="187" y2="203.5" stroke="rgb(80,140,255)" stroke-opacity="0.57" stroke-width="1"/><line x1="189" y1="203.5" x2="197" y2="203.5" stroke="rgb(80,140,255)" stroke-opacity="0.35" stroke-width="1"/><line x1="200" y1="203.5" x2="202" y2="203.5" stroke="rgb(80,140,255)" stroke-opacity="0.53" stroke-width="1"/><line x1="204" y1="203.5" x2="211" y2="203.5" stroke="rgb(80,140,255)" stroke-opacity="0.42" stroke-width="1"/><line x1="214" y1="203.5" x2="217" y2="203.5" stroke="rgb(80,140,255)" stroke-opacity="0.37" stroke-width="1"/><line x1="220" y1="203.5" x2="222" y2="203.5" stroke="rgb(80,140,255)" stroke-opacity="0.63" stroke-width="1"/><line x1="223" y1="203.5" x2="226" y2="203.5" stroke="rgb(80,140,255)" stroke-opacity="0.51" stroke-width="1"/><line x1="130" y1="221.5" x2="245" y2="221.5" stroke="rgb(50,100,240)" stroke-opacity="0.27" stroke-width="1"/><line x1="138" y1="221.5" x2="142" y2="221.5" stroke="rgb(80,140,255)" stroke-opacity="0.59" stroke-width="1"/><line x1="145" y1="221.5" x2="149" y2="221.5" stroke="rgb(80,140,255)" stroke-opacity="0.70" stroke-width="1"/><line x1="152" y1="221.5" x2="159" y2="221.5" stroke="rgb(80,140,255)" stroke-opacity="0.70" stroke-width="1"/><line x1="160" y1="221.5" x2="162" y2="221.5" stroke="rgb(80,140,255)" stroke-opacity="0.45" stroke-width="1"/><line x1="165" y1="221.5" x2="174" y2="221.5" stroke="rgb(80,140,255)" stroke-opacity="0.56" stroke-width="1"/><line x1="177" y1="221.5" x2="184" y2="221.5" stroke="rgb(80,140,255)" stroke-opacity="0.70" stroke-width="1"/><line x1="185" y1="221.5" x2="187" y2="221.5" stroke="rgb(80,140,255)" stroke-opacity="0.55" stroke-width="1"/><line x1="189" y1="221.5" x2="197" y2="221.5" stroke="rgb(80,140,255)" stroke-opacity="0.46" stroke-width="1"/><line x1="198" y1="221.5" x2="200" y2="221.5" stroke="rgb(80,140,255)" stroke-opacity="0.52" stroke-width="1"/><line x1="203" y1="221.5" x2="209" y2="221.5" stroke="rgb(80,140,255)" stroke-opacity="0.62" stroke-width="1"/><line x1="210" y1="221.5" x2="217" y2="221.5" stroke="rgb(80,140,255)" stroke-opacity="0.53" stroke-width="1"/><line x1="219" y1="221.5" x2="221" y2="221.5" stroke="rgb(80,140,255)" stroke-opacity="0.51" stroke-width="1"/><line x1="224" y1="221.5" x2="226" y2="221.5" stroke="rgb(80,140,255)" stroke-opacity="0.62" stroke-width="1"/><line x1="228" y1="221.5" x2="235" y2="221.5" stroke="rgb(80,140,255)" stroke-opacity="0.74" stroke-width="1"/><line x1="236" y1="221.5" x2="238" y2="221.5" stroke="rgb(80,140,255)" stroke-opacity="0.48" stroke-width="1"/><line x1="240" y1="221.5" x2="245" y2="221.5" stroke="rgb(80,140,255)" stroke-opacity="0.43" stroke-width="1"/><line x1="130" y1="280.5" x2="252" y2="280.5" stroke="rgb(50,100,240)" stroke-opacity="0.25" stroke-width="1"/><line x1="138" y1="280.5" x2="141" y2="280.5" stroke="rgb(80,140,255)" stroke-opacity="0.42" stroke-width="1"/><line x1="144" y1="280.5" x2="152" y2="280.5" stroke="rgb(80,140,255)" stroke-opacity="0.48" stroke-width="1"/><line x1="155" y1="280.5" x2="161" y2="280.5" stroke="rgb(80,140,255)" stroke-opacity="0.51" stroke-width="1"/><line x1="162" y1="280.5" x2="169" y2="280.5" stroke="rgb(80,140,255)" stroke-opacity="0.48" stroke-width="1"/><line x1="171" y1="280.5" x2="178" y2="280.5" stroke="rgb(80,140,255)" stroke-opacity="0.59" stroke-width="1"/><line x1="181" y1="280.5" x2="186" y2="280.5" stroke="rgb(80,140,255)" stroke-opacity="0.57" stroke-width="1"/><line x1="187" y1="280.5" x2="190" y2="280.5" stroke="rgb(80,140,255)" stroke-opacity="0.52" stroke-width="1"/><line x1="193" y1="280.5" x2="197" y2="280.5" stroke="rgb(80,140,255)" stroke-opacity="0.43" stroke-width="1"/><line x1="200" y1="280.5" x2="209" y2="280.5" stroke="rgb(80,140,255)" stroke-opacity="0.62" stroke-width="1"/><line x1="212" y1="280.5" x2="219" y2="280.5" stroke="rgb(80,140,255)" stroke-opacity="0.64" stroke-width="1"/><line x1="220" y1="280.5" x2="224" y2="280.5" stroke="rgb(80,140,255)" stroke-opacity="0.59" stroke-width="1"/><line x1="227" y1="280.5" x2="236" y2="280.5" stroke="rgb(80,140,255)" stroke-opacity="0.51" stroke-width="1"/><line x1="239" y1="280.5" x2="243" y2="280.5" stroke="rgb(80,140,255)" stroke-opacity="0.43" stroke-width="1"/><line x1="244" y1="280.5" x2="252" y2="280.5" stroke="rgb(80,140,255)" stroke-opacity="0.42" stroke-width="1"/><line x1="127" y1="299.5" x2="252" y2="299.5" stroke="rgb(50,100,240)" stroke-opacity="0.36" stroke-width="1"/><line x1="135" y1="299.5" x2="138" y2="299.5" stroke="rgb(80,140,255)" stroke-opacity="0.76" stroke-width="1"/><line x1="140" y1="299.5" x2="149" y2="299.5" stroke="rgb(80,140,255)" stroke-opacity="0.57" stroke-width="1"/><line x1="152" y1="299.5" x2="160" y2="299.5" stroke="rgb(80,140,255)" stroke-opacity="0.61" stroke-width="1"/><line x1="161" y1="299.5" x2="165" y2="299.5" stroke="rgb(80,140,255)" stroke-opacity="0.81" stroke-width="1"/><line x1="168" y1="299.5" x2="171" y2="299.5" stroke="rgb(80,140,255)" stroke-opacity="0.87" stroke-width="1"/><line x1="174" y1="299.5" x2="181" y2="299.5" stroke="rgb(80,140,255)" stroke-opacity="0.81" stroke-width="1"/><line x1="184" y1="299.5" x2="188" y2="299.5" stroke="rgb(80,140,255)" stroke-opacity="0.64" stroke-width="1"/><line x1="189" y1="299.5" x2="198" y2="299.5" stroke="rgb(80,140,255)" stroke-opacity="0.96" stroke-width="1"/><line x1="201" y1="299.5" x2="205" y2="299.5" stroke="rgb(80,140,255)" stroke-opacity="0.94" stroke-width="1"/><line x1="206" y1="299.5" x2="215" y2="299.5" stroke="rgb(80,140,255)" stroke-opacity="1.00" stroke-width="1"/><line x1="218" y1="299.5" x2="223" y2="299.5" stroke="rgb(80,140,255)" stroke-opacity="0.98" stroke-width="1"/><line x1="224" y1="299.5" x2="233" y2="299.5" stroke="rgb(80,140,255)" stroke-opacity="0.96" stroke-width="1"/><line x1="234" y1="299.5" x2="239" y2="299.5" stroke="rgb(80,140,255)" stroke-opacity="0.94" stroke-width="1"/><line x1="242" y1="299.5" x2="248" y2="299.5" stroke="rgb(80,140,255)" stroke-opacity="0.57" stroke-width="1"/><line x1="250" y1="299.5" x2="252" y2="299.5" stroke="rgb(80,140,255)" stroke-opacity="0.66" stroke-width="1"/><line x1="127" y1="312.5" x2="252" y2="312.5" stroke="rgb(50,100,240)" stroke-opacity="0.25" stroke-width="1"/><line x1="135" y1="312.5" x2="137" y2="312.5" stroke="rgb(80,140,255)" stroke-opacity="0.56" stroke-width="1"/><line x1="139" y1="312.5" x2="148" y2="312.5" stroke="rgb(80,140,255)" stroke-opacity="0.40" stroke-width="1"/><line x1="151" y1="312.5" x2="156" y2="312.5" stroke="rgb(80,140,255)" stroke-opacity="0.51" stroke-width="1"/><line x1="159" y1="312.5" x2="163" y2="312.5" stroke="rgb(80,140,255)" stroke-opacity="0.38" stroke-width="1"/><line x1="166" y1="312.5" x2="168" y2="312.5" stroke="rgb(80,140,255)" stroke-opacity="0.40" stroke-width="1"/><line x1="169" y1="312.5" x2="173" y2="312.5" stroke="rgb(80,140,255)" stroke-opacity="0.46" stroke-width="1"/><line x1="175" y1="312.5" x2="180" y2="312.5" stroke="rgb(80,140,255)" stroke-opacity="0.51" stroke-width="1"/><line x1="181" y1="312.5" x2="184" y2="312.5" stroke="rgb(80,140,255)" stroke-opacity="0.42" stroke-width="1"/><line x1="187" y1="312.5" x2="193" y2="312.5" stroke="rgb(80,140,255)" stroke-opacity="0.63" stroke-width="1"/><line x1="194" y1="312.5" x2="202" y2="312.5" stroke="rgb(80,140,255)" stroke-opacity="0.64" stroke-width="1"/><line x1="203" y1="312.5" x2="205" y2="312.5" stroke="rgb(80,140,255)" stroke-opacity="0.40" stroke-width="1"/><line x1="206" y1="312.5" x2="208" y2="312.5" stroke="rgb(80,140,255)" stroke-opacity="0.62" stroke-width="1"/><line x1="210" y1="312.5" x2="217" y2="312.5" stroke="rgb(80,140,255)" stroke-opacity="0.46" stroke-width="1"/><line x1="219" y1="312.5" x2="226" y2="312.5" stroke="rgb(80,140,255)" stroke-opacity="0.67" stroke-width="1"/><line x1="227" y1="312.5" x2="231" y2="312.5" stroke="rgb(80,140,255)" stroke-opacity="0.56" stroke-width="1"/><line x1="233" y1="312.5" x2="236" y2="312.5" stroke="rgb(80,140,255)" stroke-opacity="0.51" stroke-width="1"/><line x1="239" y1="312.5" x2="247" y2="312.5" stroke="rgb(80,140,255)" stroke-opacity="0.68" stroke-width="1"/><line x1="249" y1="312.5" x2="252" y2="312.5" stroke="rgb(80,140,255)" stroke-opacity="0.40" stroke-width="1"/><line x1="127" y1="320.5" x2="252" y2="320.5" stroke="rgb(50,100,240)" stroke-opacity="0.25" stroke-width="1"/><line x1="135" y1="320.5" x2="141" y2="320.5" stroke="rgb(80,140,255)" stroke-opacity="0.59" stroke-width="1"/><line x1="142" y1="320.5" x2="148" y2="320.5" stroke="rgb(80,140,255)" stroke-opacity="0.52" stroke-width="1"/><line x1="150" y1="320.5" x2="152" y2="320.5" stroke="rgb(80,140,255)" stroke-opacity="0.39" stroke-width="1"/><line x1="153" y1="320.5" x2="155" y2="320.5" stroke="rgb(80,140,255)" stroke-opacity="0.44" stroke-width="1"/><line x1="156" y1="320.5" x2="165" y2="320.5" stroke="rgb(80,140,255)" stroke-opacity="0.54" stroke-width="1"/><line x1="168" y1="320.5" x2="176" y2="320.5" stroke="rgb(80,140,255)" stroke-opacity="0.62" stroke-width="1"/><line x1="179" y1="320.5" x2="187" y2="320.5" stroke="rgb(80,140,255)" stroke-opacity="0.39" stroke-width="1"/><line x1="190" y1="320.5" x2="194" y2="320.5" stroke="rgb(80,140,255)" stroke-opacity="0.51" stroke-width="1"/><line x1="197" y1="320.5" x2="206" y2="320.5" stroke="rgb(80,140,255)" stroke-opacity="0.55" stroke-width="1"/><line x1="208" y1="320.5" x2="213" y2="320.5" stroke="rgb(80,140,255)" stroke-opacity="0.36" stroke-width="1"/><line x1="214" y1="320.5" x2="219" y2="320.5" stroke="rgb(80,140,255)" stroke-opacity="0.53" stroke-width="1"/><line x1="221" y1="320.5" x2="228" y2="320.5" stroke="rgb(80,140,255)" stroke-opacity="0.69" stroke-width="1"/><line x1="231" y1="320.5" x2="235" y2="320.5" stroke="rgb(80,140,255)" stroke-opacity="0.50" stroke-width="1"/><line x1="236" y1="320.5" x2="239" y2="320.5" stroke="rgb(80,140,255)" stroke-opacity="0.47" stroke-width="1"/><line x1="242" y1="320.5" x2="250" y2="320.5" stroke="rgb(80,140,255)" stroke-opacity="0.47" stroke-width="1"/><line x1="251" y1="320.5" x2="252" y2="320.5" stroke="rgb(80,140,255)" stroke-opacity="0.39" stroke-width="1"/></svg>
<svg class="a" style="left:0;top:0" width="625" height="330"><defs><filter id="nz1" x="0" y="0" width="100%" height="100%" color-interpolation-filters="sRGB"><feTurbulence type="fractalNoise" baseFrequency="0.9 1.1" numOctaves="2" seed="5"/><feColorMatrix type="matrix" values="0 0 0 0 0.06 0 0 0 0 0.14 0 0 0 0 0.86 3.2 0 0 0 -1.7"/></filter><filter id="nz2" x="0" y="0" width="100%" height="100%" color-interpolation-filters="sRGB"><feTurbulence type="fractalNoise" baseFrequency="0.9 1.1" numOctaves="2" seed="11"/><feColorMatrix type="matrix" values="0 0 0 0 0 0 0 0 0 0 0 0 0 0 0.25 3.2 0 0 0 -1.75"/></filter><filter id="nz3" x="0" y="0" width="100%" height="100%" color-interpolation-filters="sRGB"><feTurbulence type="fractalNoise" baseFrequency="0.8 1.0" numOctaves="2" seed="21"/><feColorMatrix type="matrix" values="0 0 0 0 0.18 0 0 0 0 0.36 0 0 0 0 1 3.6 0 0 0 -1.62"/></filter><linearGradient id="bandg" x1="0" x2="1" y1="0" y2="0"><stop offset="0" stop-color="#fff" stop-opacity="0"/><stop offset="0.45" stop-color="#fff" stop-opacity="0.8"/><stop offset="0.86" stop-color="#fff" stop-opacity="1"/><stop offset="1" stop-color="#fff" stop-opacity="0"/></linearGradient><mask id="bandm" maskUnits="userSpaceOnUse" x="0" y="0" width="625" height="330"><rect x="100.1" y="0" width="41" height="6" fill="url(#bandg)"/><rect x="99.7" y="6" width="41" height="7" fill="url(#bandg)"/><rect x="97.7" y="13" width="41" height="4" fill="url(#bandg)"/><rect x="96.8" y="17" width="41" height="3" fill="url(#bandg)"/><rect x="97.0" y="20" width="41" height="6" fill="url(#bandg)"/><rect x="97.1" y="26" width="41" height="8" fill="url(#bandg)"/><rect x="97.0" y="34" width="41" height="7" fill="url(#bandg)"/><rect x="97.5" y="41" width="41" height="6" fill="url(#bandg)"/><rect x="96.6" y="47" width="41" height="7" fill="url(#bandg)"/><rect x="96.5" y="54" width="41" height="9" fill="url(#bandg)"/><rect x="98.8" y="63" width="41" height="6" fill="url(#bandg)"/><rect x="98.4" y="69" width="41" height="4" fill="url(#bandg)"/><rect x="98.3" y="73" width="41" height="8" fill="url(#bandg)"/><rect x="98.6" y="81" width="41" height="7" fill="url(#bandg)"/><rect x="99.2" y="88" width="41" height="8" fill="url(#bandg)"/><rect x="98.5" y="96" width="41" height="9" fill="url(#bandg)"/><rect x="99.7" y="105" width="41" height="5" fill="url(#bandg)"/><rect x="100.8" y="110" width="41" height="5" fill="url(#bandg)"/><rect x="100.5" y="115" width="41" height="6" fill="url(#bandg)"/><rect x="100.1" y="121" width="41" height="7" fill="url(#bandg)"/><rect x="101.8" y="128" width="41" height="7" fill="url(#bandg)"/><rect x="101.8" y="135" width="41" height="7" fill="url(#bandg)"/><rect x="101.5" y="142" width="41" height="3" fill="url(#bandg)"/><rect x="102.8" y="145" width="41" height="4" fill="url(#bandg)"/><rect x="101.7" y="149" width="41" height="8" fill="url(#bandg)"/><rect x="100.9" y="157" width="41" height="9" fill="url(#bandg)"/><rect x="101.6" y="166" width="41" height="4" fill="url(#bandg)"/><rect x="100.2" y="170" width="41" height="8" fill="url(#bandg)"/><rect x="99.0" y="178" width="41" height="3" fill="url(#bandg)"/><rect x="99.8" y="181" width="41" height="6" fill="url(#bandg)"/><rect x="98.9" y="187" width="41" height="6" fill="url(#bandg)"/><rect x="99.6" y="193" width="41" height="6" fill="url(#bandg)"/><rect x="99.3" y="199" width="41" height="4" fill="url(#bandg)"/><rect x="98.5" y="203" width="41" height="3" fill="url(#bandg)"/><rect x="98.4" y="206" width="41" height="4" fill="url(#bandg)"/><rect x="99.2" y="210" width="41" height="4" fill="url(#bandg)"/><rect x="99.0" y="214" width="41" height="3" fill="url(#bandg)"/><rect x="98.0" y="217" width="41" height="6" fill="url(#bandg)"/><rect x="98.8" y="223" width="41" height="6" fill="url(#bandg)"/><rect x="98.1" y="229" width="41" height="4" fill="url(#bandg)"/><rect x="98.0" y="233" width="41" height="8" fill="url(#bandg)"/><rect x="97.1" y="241" width="41" height="3" fill="url(#bandg)"/><rect x="98.0" y="244" width="41" height="9" fill="url(#bandg)"/><rect x="98.6" y="253" width="41" height="9" fill="url(#bandg)"/><rect x="99.4" y="262" width="41" height="7" fill="url(#bandg)"/><rect x="97.1" y="269" width="41" height="3" fill="url(#bandg)"/><rect x="96.2" y="272" width="41" height="4" fill="url(#bandg)"/><rect x="95.9" y="276" width="41" height="4" fill="url(#bandg)"/><rect x="96.8" y="280" width="41" height="4" fill="url(#bandg)"/><rect x="97.2" y="284" width="41" height="5" fill="url(#bandg)"/><rect x="96.1" y="289" width="41" height="9" fill="url(#bandg)"/><rect x="95.1" y="298" width="41" height="5" fill="url(#bandg)"/><rect x="95.1" y="303" width="41" height="9" fill="url(#bandg)"/><rect x="94.5" y="312" width="41" height="8" fill="url(#bandg)"/><rect x="93.9" y="320" width="41" height="5" fill="url(#bandg)"/><rect x="93.7" y="325" width="41" height="9" fill="url(#bandg)"/></mask><linearGradient id="stg" x1="0" x2="1" y1="0" y2="0"><stop offset="0" stop-color="#fff" stop-opacity="0"/><stop offset="0.3" stop-color="#fff" stop-opacity="0.7"/><stop offset="0.7" stop-color="#fff" stop-opacity="0.7"/><stop offset="1" stop-color="#fff" stop-opacity="0"/></linearGradient><mask id="stm" maskUnits="userSpaceOnUse" x="0" y="0" width="625" height="330"><rect x="215" y="0" width="175" height="330" fill="url(#stg)"/></mask></defs><rect width="625" height="330" filter="url(#nz1)" opacity="0.55"/><rect width="625" height="330" filter="url(#nz2)" opacity="0.6"/><g mask="url(#bandm)"><rect width="625" height="330" filter="url(#nz3)"/></g><g mask="url(#stm)"><rect width="625" height="330" filter="url(#nz3)" opacity="0.6"/></g></svg>
<div class="a" style="left:286px;top:0;width:1px;height:330px;background:rgb(35,78,228)"></div>
<div class="a" style="left:294px;top:0;width:1px;height:330px;background:rgb(180,204,112)"></div>
<div class="a" style="left:302px;top:0;width:1px;height:330px;background:rgb(180,204,112)"></div>
<div class="a" style="left:310px;top:0;width:2px;height:330px;background:rgb(136,184,160)"></div>
<div class="a" style="left:312px;top:0;width:1px;height:330px;background:rgb(70,130,245)"></div>
<div class="a" style="left:313px;top:0;width:1px;height:330px;background:rgb(120,180,165)"></div>
<div class="a" style="left:319px;top:0;width:1px;height:330px;background:rgb(180,204,112)"></div>
<div class="a" style="left:327px;top:0;width:1px;height:330px;background:rgb(180,204,112)"></div>
<div class="a" style="left:335px;top:0;width:1px;height:330px;background:rgb(74,140,240)"></div>
<div class="a" style="left:343px;top:0;width:1px;height:330px;background:rgb(52,110,230)"></div>
<div class="a" style="left:372px;top:0;width:1px;height:330px;background:rgb(24,58,200)"></div>
<div class="a" style="left:266px;top:0;width:1px;height:330px;background:rgb(26,60,212)"></div>
<div class="a" style="left:250px;top:0;width:1px;height:330px;background:rgb(24,56,206)"></div>
</div>
<div class="a" style="left:0px;top:626px;width:626px;height:1px;background:#000000"></div>
<div class="a" style="left:0px;top:627px;width:627px;height:1px;background:#ffffff"></div>
<div class="t" style="left:636.60px;top:63.05px;font-size:12.7px;line-height:12.7px;color:#232323;letter-spacing:0.419px;">Input controls</div>
<svg class="a" style="left:966px;top:62px" width="28" height="13">
<rect x="1.5" y="1.5" width="10" height="10" rx="2" fill="none" stroke="#646464" stroke-width="1"/>
<rect x="5.5" y="3.5" width="4" height="4" rx="1" fill="none" stroke="#646464" stroke-width="1"/>
<rect x="3.5" y="5.5" width="4" height="4" rx="1" fill="#efefef" stroke="#646464" stroke-width="1"/>
<rect x="15.5" y="1.5" width="10" height="10" rx="2" fill="none" stroke="#646464" stroke-width="1"/>
<path d="M18.2 4.2 L22.8 8.8 M22.8 4.2 L18.2 8.8" stroke="#505050" stroke-width="2"/>
</svg>
<div class="t" style="left:637.50px;top:90.25px;font-size:12.7px;line-height:12.7px;color:#232323;letter-spacing:-0.500px;">LNB LO</div>
<div class="a" style="left:688px;top:84px;width:301px;height:22px;box-sizing:border-box;border:1px solid #b4b4b4;border-radius:3px;background:#ffffff"></div>
<div class="a" style="left:974px;top:85px;width:1px;height:20px;background:#bcbcbc"></div>
<div class="a" style="left:975px;top:85px;width:13px;height:20px;background:linear-gradient(#fdfdfd,#f2f2f2);border-radius:0 2px 2px 0"></div>
<svg class="a" style="left:977px;top:84px" width="8" height="22"><path d="M0.2 9 L4 5 L7.8 9 Z" fill="#5a5a5a"/><path d="M0.2 13 L4 17 L7.8 13 Z" fill="#5a5a5a"/></svg>
<div class="t" style="left:881.70px;top:89.75px;font-size:12.7px;line-height:12.7px;color:#232323;letter-spacing:0.245px;">0.000000 MHz</div>
<div class="a" style="left:637px;top:116px;width:14px;height:14px;box-sizing:border-box;border:1px solid #c2c2c2;border-radius:1px;background:linear-gradient(#ffffff,#fafafa)"></div>
<div class="t" style="left:656.70px;top:118.05px;font-size:12.7px;line-height:12.7px;color:#232323;letter-spacing:0.118px;">Hardware AGC</div>
<div class="t" style="left:637.40px;top:141.95px;font-size:12.7px;line-height:12.7px;color:#232323;letter-spacing:0.186px;">TIA gain</div>
<div class="t" style="left:637.40px;top:163.25px;font-size:12.7px;line-height:12.7px;color:#232323;letter-spacing:0.179px;">LNA gain</div>
<div class="t" style="left:637.40px;top:184.05px;font-size:12.7px;line-height:12.7px;color:#232323;">PGA gain</div>
<div class="a" style="left:772px;top:145px;width:82px;height:5px;box-sizing:border-box;border:1px solid #bdbdbd;border-radius:3px;background:#dcdcdc"></div>
<div class="a" style="left:772px;top:145px;width:54px;height:5px;box-sizing:border-box;border:1px solid #2b86c4;border-radius:3px;background:#3daee9"></div>
<div class="a" style="left:820px;top:141px;width:13px;height:13px;box-sizing:border-box;border:1px solid #a8a8a8;border-radius:3px;background:linear-gradient(#ffffff,#f0f0f0)"></div>
<div class="a" style="left:772px;top:166px;width:82px;height:5px;box-sizing:border-box;border:1px solid #bdbdbd;border-radius:3px;background:#dcdcdc"></div>
<div class="a" style="left:772px;top:166px;width:52px;height:5px;box-sizing:border-box;border:1px solid #2b86c4;border-radius:3px;background:#3daee9"></div>
<div class="a" style="left:818px;top:162px;width:13px;height:13px;box-sizing:border-box;border:1px solid #a8a8a8;border-radius:3px;background:linear-gradient(#ffffff,#f0f0f0)"></div>
<div class="a" style="left:772px;top:187px;width:82px;height:5px;box-sizing:border-box;border:1px solid #bdbdbd;border-radius:3px;background:#dcdcdc"></div>
<div class="a" style="left:772px;top:187px;width:52px;height:5px;box-sizing:border-box;border:1px solid #2b86c4;border-radius:3px;background:#3daee9"></div>
<div class="a" style="left:818px;top:183px;width:13px;height:13px;box-sizing:border-box;border:1px solid #a8a8a8;border-radius:3px;background:linear-gradient(#ffffff,#f0f0f0)"></div>
<div class="t" style="left:876.30px;top:142.25px;font-size:12.7px;line-height:12.7px;color:#232323;letter-spacing:0.200px;">8.0 dB</div>
<div class="t" style="left:876.30px;top:163.25px;font-size:12.7px;line-height:12.7px;color:#232323;letter-spacing:0.233px;">20.0 dB</div>
<div class="t" style="left:876.30px;top:184.25px;font-size:12.7px;line-height:12.7px;color:#232323;letter-spacing:0.200px;">8.0 dB</div>
<div class="a" style="left:637px;top:206px;width:14px;height:14px;box-sizing:border-box;border:1px solid #c2c2c2;border-radius:1px;background:linear-gradient(#ffffff,#fafafa)"></div>
<div class="t" style="left:656.50px;top:207.95px;font-size:12.7px;line-height:12.7px;color:#232323;letter-spacing:0.036px;">Swap I/Q</div>
<div class="a" style="left:816px;top:206px;width:14px;height:14px;box-sizing:border-box;border:1px solid #c2c2c2;border-radius:1px;background:linear-gradient(#ffffff,#fafafa)"></div>
<div class="t" style="left:835.00px;top:207.95px;font-size:12.7px;line-height:12.7px;color:#232323;letter-spacing:0.412px;">No limits</div>
<div class="a" style="left:637px;top:233px;width:14px;height:14px;box-sizing:border-box;border:1px solid #c2c2c2;border-radius:1px;background:linear-gradient(#ffffff,#fafafa)"></div>
<div class="t" style="left:656.50px;top:235.15px;font-size:12.7px;line-height:12.7px;color:#232323;letter-spacing:0.275px;">DC remove</div>
<div class="a" style="left:816px;top:233px;width:14px;height:14px;box-sizing:border-box;border:1px solid #c2c2c2;border-radius:1px;background:linear-gradient(#ffffff,#fafafa)"></div>
<div class="t" style="left:835.00px;top:235.15px;font-size:12.7px;line-height:12.7px;color:#232323;letter-spacing:0.233px;">IQ balance</div>
<div class="t" style="left:638.20px;top:264.25px;font-size:12.7px;line-height:12.7px;color:#232323;letter-spacing:0.343px;">Freq. correction</div>
<div class="a" style="left:739px;top:258px;width:250px;height:22px;box-sizing:border-box;border:1px solid #b4b4b4;border-radius:3px;background:#ffffff"></div>
<div class="a" style="left:974px;top:259px;width:1px;height:20px;background:#bcbcbc"></div>
<div class="a" style="left:975px;top:259px;width:13px;height:20px;background:linear-gradient(#fdfdfd,#f2f2f2);border-radius:0 2px 2px 0"></div>
<svg class="a" style="left:977px;top:258px" width="8" height="22"><path d="M0.2 9 L4 5 L7.8 9 Z" fill="#5a5a5a"/><path d="M0.2 13 L4 17 L7.8 13 Z" fill="#5a5a5a"/></svg>
<div class="t" style="left:744.60px;top:264.25px;font-size:12.7px;line-height:12.7px;color:#232323;letter-spacing:0.467px;">0.0 ppm</div>
<div class="t" style="left:637.20px;top:292.95px;font-size:12.7px;line-height:12.7px;color:#232323;letter-spacing:0.308px;">Antenna</div>
<div class="a" style="left:739px;top:287px;width:250px;height:23px;box-sizing:border-box;border:1px solid #b4b4b4;border-radius:3px;background:linear-gradient(#fcfcfc,#f0f0f0)"></div>
<svg class="a" style="left:972px;top:295px" width="11" height="6"><path d="M0.5 0.5 L10.5 0.5 L5.5 5.5 Z" fill="#555"/></svg>
<div class="t" style="left:744.60px;top:292.95px;font-size:12.7px;line-height:12.7px;color:#232323;letter-spacing:-0.667px;">LNAW</div>
<div class="a" style="left:637px;top:316px;width:352px;height:1px;background:#b4b4b4"></div>
<div class="a" style="left:637px;top:328px;width:14px;height:14px;box-sizing:border-box;border:1px solid #c2c2c2;border-radius:1px;background:linear-gradient(#ffffff,#fafafa)"></div>
<svg class="a" style="left:637px;top:328px" width="14" height="14"><path d="M3 7.5 L5.8 10.5 L11 3.5" fill="none" stroke="#232323" stroke-width="2"/></svg>
<div class="t" style="left:656.50px;top:330.35px;font-size:12.7px;line-height:12.7px;color:#232323;letter-spacing:0.422px;">Reset frequency controller digits</div>
<div class="a" style="left:629px;top:336px;width:1px;height:1px;background:#a8a8a8"></div>
<div class="a" style="left:629px;top:339px;width:1px;height:1px;background:#a8a8a8"></div>
<div class="a" style="left:629px;top:342px;width:1px;height:1px;background:#a8a8a8"></div>
<div class="a" style="left:629px;top:345px;width:1px;height:1px;background:#a8a8a8"></div>
<div class="a" style="left:629px;top:348px;width:1px;height:1px;background:#a8a8a8"></div>
<div class="a" style="left:629px;top:351px;width:1px;height:1px;background:#a8a8a8"></div>
<div class="a" style="left:739px;top:395px;width:255px;height:1px;background:#b4b4b4"></div>
<div class="a" style="left:632px;top:395px;width:108px;height:25px;box-sizing:border-box;border:1px solid #a8a8a8;border-top:none;border-radius:0 0 3px 3px;background:linear-gradient(#fcfcfc,#f2f2f2)"></div>
<div class="a" style="left:739px;top:395px;width:128px;height:23px;box-sizing:border-box;border:1px solid #b0b0b0;border-radius:0 0 3px 3px;background:#dcdcdc"></div>
<div class="a" style="left:866px;top:395px;width:99px;height:23px;box-sizing:border-box;border:1px solid #b0b0b0;border-radius:0 0 3px 3px;background:#dcdcdc"></div>
<div class="a" style="left:632px;top:395px;width:107px;height:1px;background:#fcfcfc"></div>
<div class="t" style="left:644.10px;top:402.05px;font-size:12.7px;line-height:12.7px;color:#232323;letter-spacing:0.435px;">Input controls</div>
<div class="t" style="left:751.70px;top:401.25px;font-size:12.7px;line-height:12.7px;color:#232323;letter-spacing:0.280px;">Receiver Options</div>
<div class="t" style="left:878.50px;top:401.25px;font-size:12.7px;line-height:12.7px;color:#232323;letter-spacing:0.077px;">FFT Settings</div>
<div class="a" style="left:806px;top:423px;width:1px;height:1px;background:#b0b0b0"></div>
<div class="a" style="left:809px;top:423px;width:1px;height:1px;background:#b0b0b0"></div>
<div class="a" style="left:812px;top:423px;width:1px;height:1px;background:#b0b0b0"></div>
<div class="a" style="left:815px;top:423px;width:1px;height:1px;background:#b0b0b0"></div>
<div class="a" style="left:818px;top:423px;width:1px;height:1px;background:#b0b0b0"></div>
<div class="a" style="left:821px;top:423px;width:1px;height:1px;background:#b0b0b0"></div>
<div class="t" style="left:636.60px;top:431.05px;font-size:12.7px;line-height:12.7px;color:#232323;letter-spacing:0.050px;">Audio</div>
<svg class="a" style="left:966px;top:430px" width="28" height="13">
<rect x="1.5" y="1.5" width="10" height="10" rx="2" fill="none" stroke="#646464" stroke-width="1"/>
<rect x="5.5" y="3.5" width="4" height="4" rx="1" fill="none" stroke="#646464" stroke-width="1"/>
<rect x="3.5" y="5.5" width="4" height="4" rx="1" fill="#efefef" stroke="#646464" stroke-width="1"/>
<rect x="15.5" y="1.5" width="10" height="10" rx="2" fill="none" stroke="#646464" stroke-width="1"/>
<path d="M18.2 4.2 L22.8 8.8 M22.8 4.2 L18.2 8.8" stroke="#505050" stroke-width="2"/>
</svg>
<div class="a" style="left:641px;top:455px;width:344px;height:84px;background:#1f1e1f"></div>
<div class="a" style="left:684px;top:455px;width:301px;height:1px;background-image:linear-gradient(to right,#5a5a5a 1px,transparent 1px);background-size:3px 1px;"></div>
<div class="a" style="left:684px;top:476px;width:301px;height:1px;background-image:linear-gradient(to right,#5a5a5a 1px,transparent 1px);background-size:3px 1px;"></div>
<div class="a" style="left:684px;top:497px;width:301px;height:1px;background-image:linear-gradient(to right,#5a5a5a 1px,transparent 1px);background-size:3px 1px;"></div>
<div class="a" style="left:698px;top:455px;width:1px;height:58px;background-image:linear-gradient(#5a5a5a 1px,transparent 1px);background-size:1px 3px;"></div>
<div class="a" style="left:755px;top:455px;width:1px;height:58px;background-image:linear-gradient(#5a5a5a 1px,transparent 1px);background-size:1px 3px;"></div>
<div class="a" style="left:812px;top:455px;width:1px;height:58px;background-image:linear-gradient(#5a5a5a 1px,transparent 1px);background-size:1px 3px;"></div>
<div class="a" style="left:870px;top:455px;width:1px;height:58px;background-image:linear-gradient(#5a5a5a 1px,transparent 1px);background-size:1px 3px;"></div>
<div class="a" style="left:927px;top:455px;width:1px;height:58px;background-image:linear-gradient(#5a5a5a 1px,transparent 1px);background-size:1px 3px;"></div>
<div class="t" style="left:657.40px;top:471.45px;font-size:12.7px;line-height:12.7px;color:#c8c8c8;letter-spacing:0.325px;">-20</div>
<div class="t" style="left:657.40px;top:492.45px;font-size:12.7px;line-height:12.7px;color:#c8c8c8;letter-spacing:0.325px;">-40</div>
<div class="t" style="left:678.00px;top:520.55px;width:40px;text-align:center;font-size:12.7px;line-height:12.7px;color:#c8c8c8;letter-spacing:0.3px">2</div>
<div class="t" style="left:735.25px;top:520.55px;width:40px;text-align:center;font-size:12.7px;line-height:12.7px;color:#c8c8c8;letter-spacing:0.3px">4</div>
<div class="t" style="left:792.50px;top:520.55px;width:40px;text-align:center;font-size:12.7px;line-height:12.7px;color:#c8c8c8;letter-spacing:0.3px">6</div>
<div class="t" style="left:849.75px;top:520.55px;width:40px;text-align:center;font-size:12.7px;line-height:12.7px;color:#c8c8c8;letter-spacing:0.3px">8</div>
<div class="t" style="left:907.00px;top:520.55px;width:40px;text-align:center;font-size:12.7px;line-height:12.7px;color:#c8c8c8;letter-spacing:0.3px">10</div>
<div class="t" style="left:964.25px;top:520.55px;width:40px;text-align:center;font-size:12.7px;line-height:12.7px;color:#c8c8c8;letter-spacing:0.3px">12</div>
<div class="a" style="left:985px;top:455px;width:9px;height:84px;background:#efefef"></div>
<div class="t" style="left:641.30px;top:551.05px;font-size:12.7px;line-height:12.7px;color:#232323;letter-spacing:0.162px;">Gain:</div>
<div class="a" style="left:680px;top:553px;width:247px;height:5px;box-sizing:border-box;border:1px solid #bdbdbd;border-radius:3px;background:#dcdcdc"></div>
<div class="a" style="left:680px;top:553px;width:214px;height:5px;box-sizing:border-box;border:1px solid #2b86c4;border-radius:3px;background:#3daee9"></div>
<div class="a" style="left:888px;top:549px;width:13px;height:13px;box-sizing:border-box;border:1px solid #a8a8a8;border-radius:3px;background:linear-gradient(#ffffff,#f0f0f0)"></div>
<div class="t" style="left:938.70px;top:551.25px;font-size:12.7px;line-height:12.7px;color:#232323;letter-spacing:0.250px;">35.7 dB</div>
<div class="a" style="left:641px;top:573px;width:86px;height:24px;box-sizing:border-box;border:1px solid #b4b4b4;border-radius:3px;background:linear-gradient(#fcfcfc,#eeeeee)"></div>
<div class="t" style="left:671.50px;top:580.05px;font-size:12.7px;line-height:12.7px;color:#232323;letter-spacing:-0.950px;">UDP</div>
<div class="a" style="left:727px;top:573px;width:86px;height:24px;box-sizing:border-box;border:1px solid #b4b4b4;border-radius:3px;background:linear-gradient(#fcfcfc,#eeeeee)"></div>
<div class="t" style="left:759.20px;top:580.05px;font-size:12.7px;line-height:12.7px;color:#232323;letter-spacing:-0.400px;">Rec</div>
<div class="a" style="left:813px;top:573px;width:86px;height:24px;box-sizing:border-box;border:1px solid #b4b4b4;border-radius:3px;background:linear-gradient(#fcfcfc,#eeeeee)"></div>
<div class="t" style="left:843.90px;top:580.05px;font-size:12.7px;line-height:12.7px;color:#a8a8a8;letter-spacing:-0.100px;">Play</div>
<div class="a" style="left:899px;top:573px;width:86px;height:24px;box-sizing:border-box;border:1px solid #b4b4b4;border-radius:3px;background:linear-gradient(#fcfcfc,#eeeeee)"></div>
<div class="a" style="left:937.2px;top:588.1px;width:1.7px;height:1.8px;background:#2a2a2a"></div>
<div class="a" style="left:941.1px;top:588.1px;width:1.7px;height:1.8px;background:#2a2a2a"></div>
<div class="a" style="left:944.9px;top:588.1px;width:1.7px;height:1.8px;background:#2a2a2a"></div>
<div class="t" style="left:800.60px;top:604.65px;font-size:12.7px;line-height:12.7px;color:#232323;letter-spacing:-0.850px;font-style:italic;">DSP</div>
<div class="a" style="left:991px;top:637px;width:1px;height:1px;background:#a8a8a8"></div>
<div class="a" style="left:988px;top:640px;width:1px;height:1px;background:#a8a8a8"></div>
<div class="a" style="left:991px;top:640px;width:1px;height:1px;background:#a8a8a8"></div>
<div class="a" style="left:985px;top:643px;width:1px;height:1px;background:#a8a8a8"></div>
<div class="a" style="left:988px;top:643px;width:1px;height:1px;background:#a8a8a8"></div>
<div class="a" style="left:991px;top:643px;width:1px;height:1px;background:#a8a8a8"></div>
<div class="a" style="left:982px;top:646px;width:1px;height:1px;background:#a8a8a8"></div>
<div class="a" style="left:985px;top:646px;width:1px;height:1px;background:#a8a8a8"></div>
<div class="a" style="left:988px;top:646px;width:1px;height:1px;background:#a8a8a8"></div>
<div class="a" style="left:991px;top:646px;width:1px;height:1px;background:#a8a8a8"></div>
</body></html>
